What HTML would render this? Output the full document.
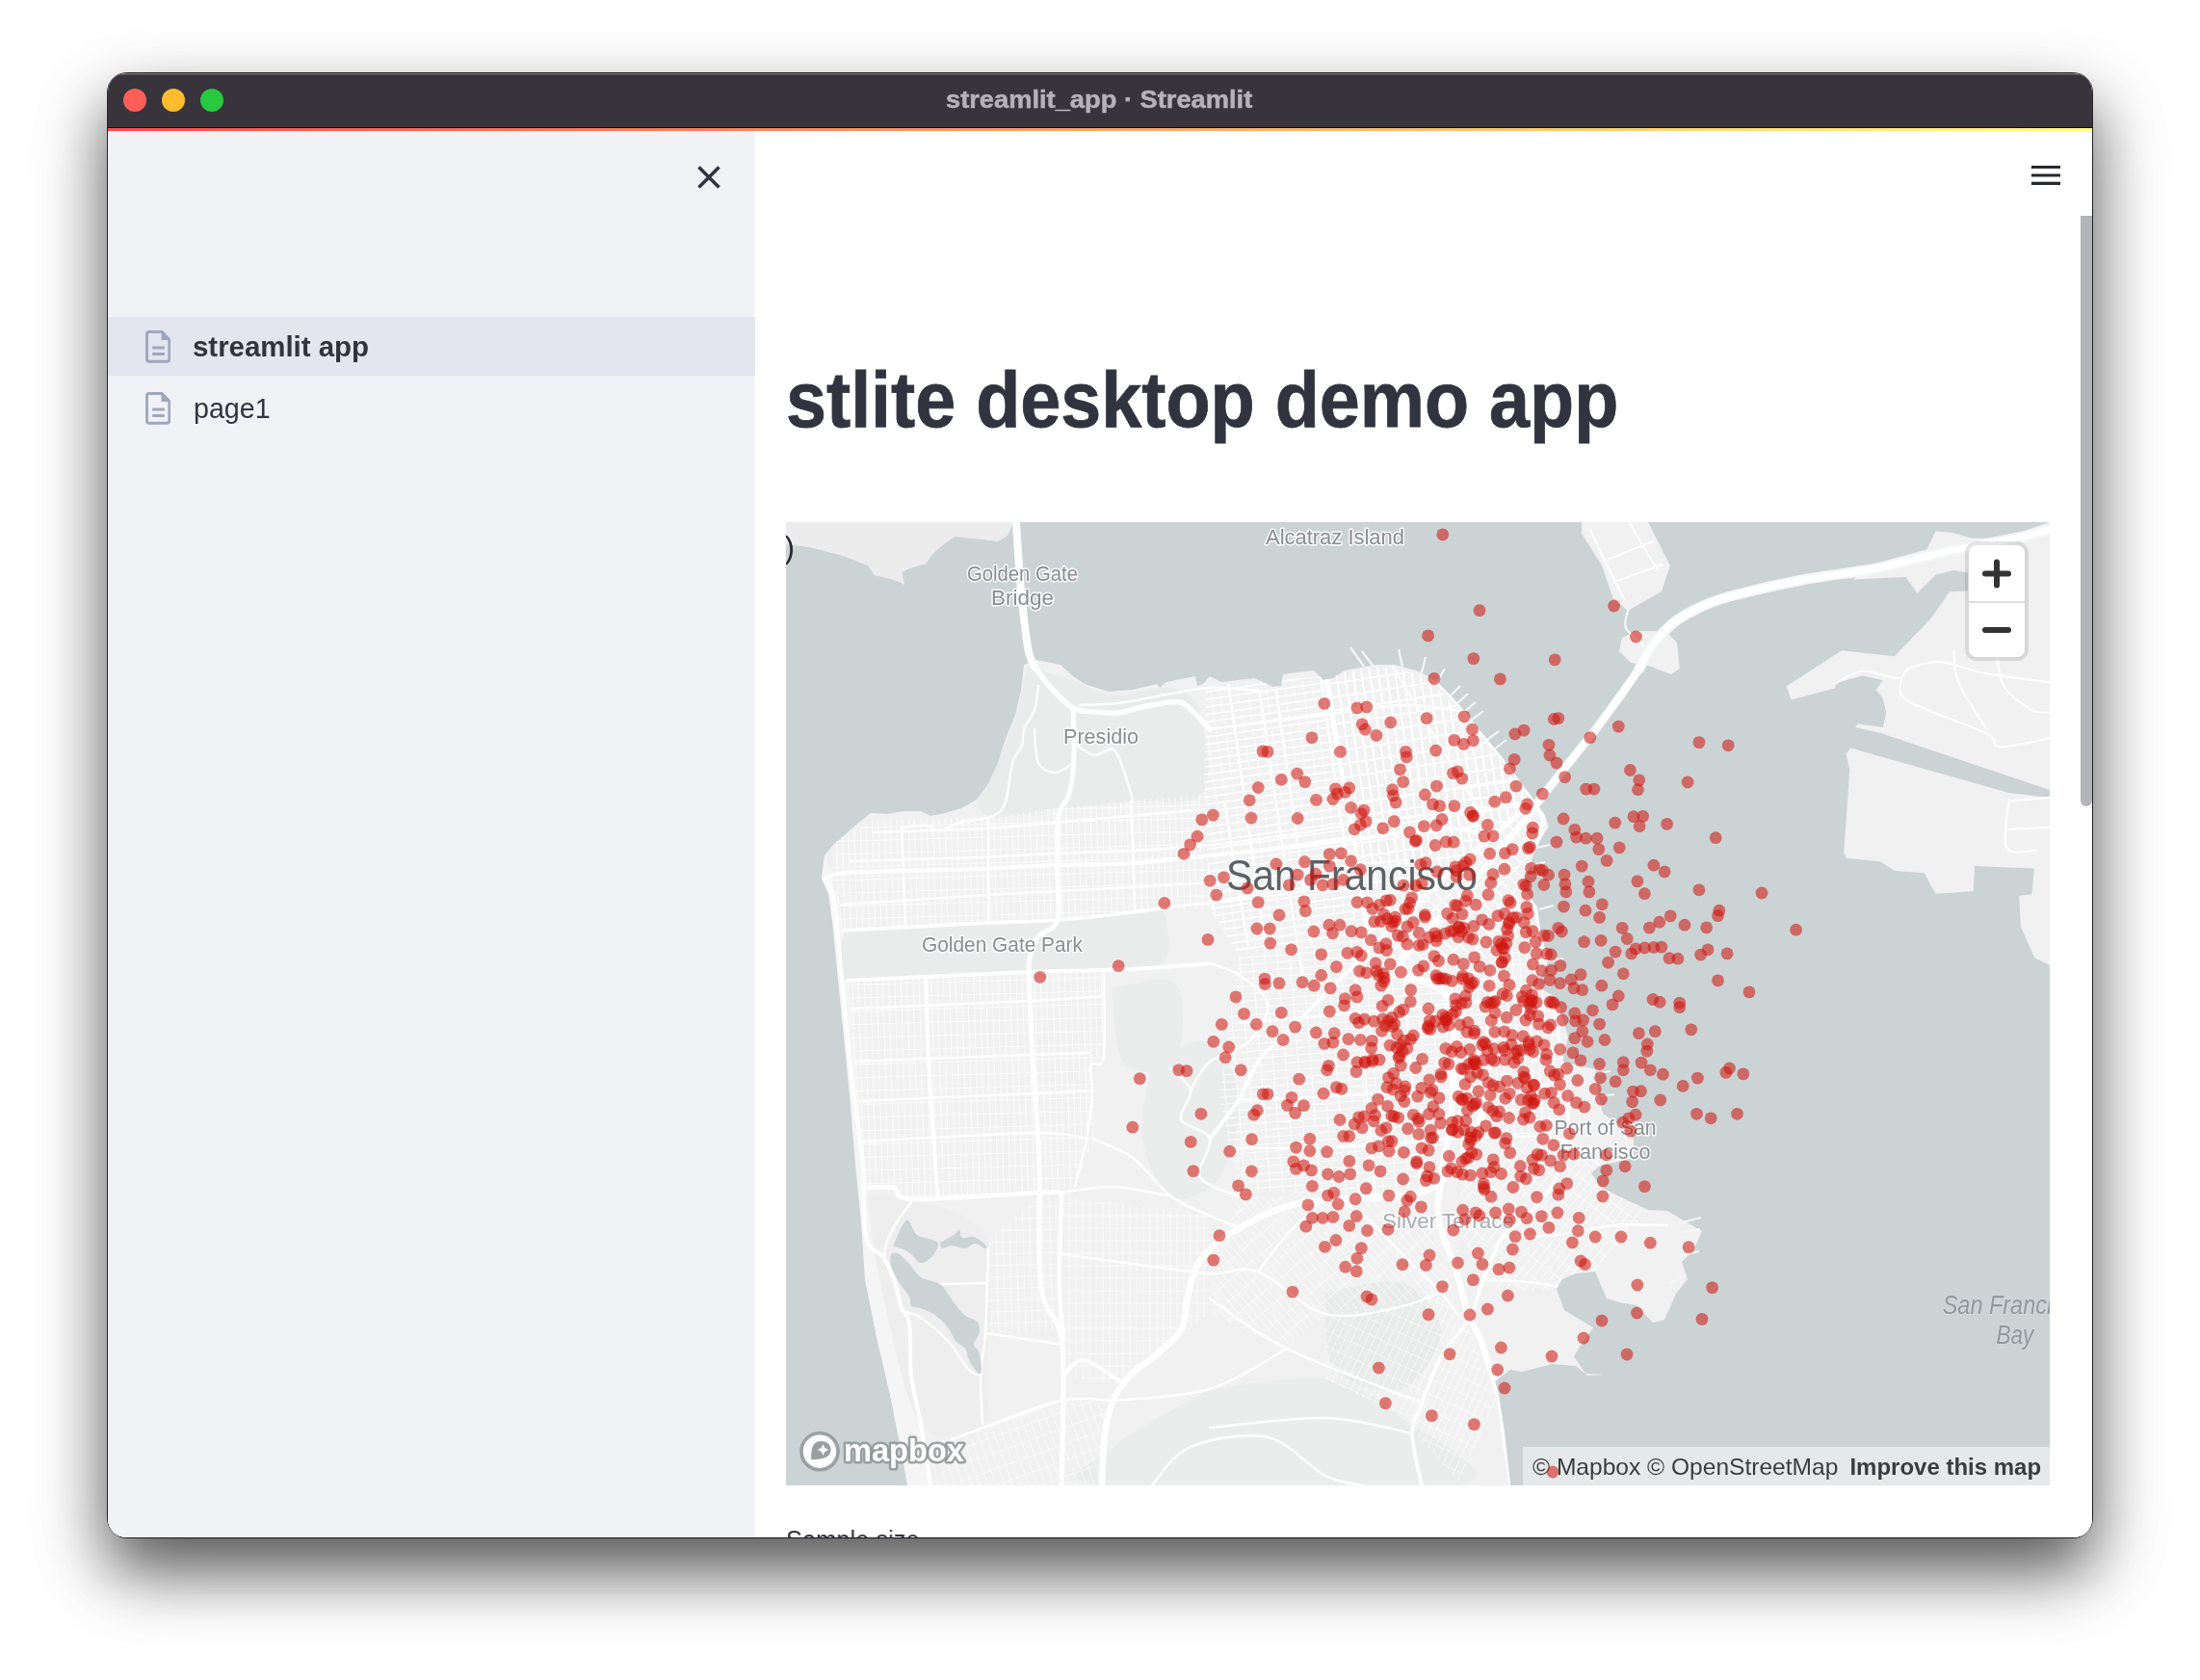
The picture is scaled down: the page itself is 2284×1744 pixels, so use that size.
<!DOCTYPE html>
<html lang="en">
<head>
<meta charset="utf-8">
<title>streamlit_app · Streamlit</title>
<style>
html,body{margin:0;padding:0;}
body{width:2284px;height:1744px;overflow:hidden;background:#fff;position:relative;font-family:"Liberation Sans",sans-serif;}
.abs{position:absolute;}
#shadow{position:absolute;left:112px;top:76px;width:2060px;height:1520px;border-radius:20px;
  box-shadow:0 0 0 1px rgba(0,0,0,.8), 0 34px 65px rgba(0,0,0,.6), 0 32px 95px rgba(0,0,0,.14);}
#win{will-change:transform;position:absolute;left:112px;top:76px;width:2060px;height:1520px;border-radius:19px;overflow:hidden;background:#fff;}
#tbar{position:absolute;left:0;top:0;width:2060px;height:57px;background:#38343b;box-shadow:inset 0 1.500px 0 rgba(255,255,255,.28);}
#tbar .t{position:absolute;left:869.5px;top:11px;font-weight:bold;font-size:26.3px;line-height:32px;color:#b5b2b9;-webkit-text-stroke:.5px #b5b2b9;white-space:nowrap;transform-origin:0 50%;transform:scaleX(1.037);}
.tl{position:absolute;top:16px;width:24px;height:24px;border-radius:50%;}
#sep{position:absolute;left:0;top:56px;width:2060px;height:1px;background:#160c10;}
#deco{position:absolute;left:0;top:57px;width:2060px;height:3px;background:linear-gradient(90deg,#ff4b4b,#fffd80);}
#side{position:absolute;left:0;top:60px;width:674px;height:1460px;background:linear-gradient(90deg,#f0f2f6 0,#f0f2f6 670px,#fff 674px);}
#side .sel{position:absolute;left:0;top:193px;width:672px;height:61px;background:#e3e6ee;}
.nav{position:absolute;left:87.7px;white-space:nowrap;font-size:30px;line-height:40px;color:#31333f;transform-origin:0 50%;}
#main{position:absolute;left:672px;top:60px;width:1388px;height:1460px;background:#fff;}
h1{position:absolute;margin:0;left:32px;top:228.7px;font-size:81.5px;line-height:100px;font-weight:bold;color:#31333f;-webkit-text-stroke:.8px #31333f;white-space:nowrap;transform-origin:0 50%;}
#sb{position:absolute;left:2048px;top:148px;width:12px;height:613px;background:#b4b5b9;border-radius:0 0 6px 6px;}
#map{position:absolute;left:704px;top:466px;width:1312px;height:1000px;overflow:hidden;background:#cbd3d5;}
#lbl{position:absolute;left:704px;top:1506px;transform-origin:0 50%;transform:scaleX(.943);font-size:27px;line-height:34px;color:#31333f;white-space:nowrap;}
</style>
</head>
<body>
<div id="shadow"></div>
<div id="win">
<div id="tbar">
  <div class="tl" style="left:16px;background:#fe5f57;"></div>
  <div class="tl" style="left:56px;background:#febc2e;"></div>
  <div class="tl" style="left:96px;background:#28c840;"></div>
  <div class="t">streamlit_app · Streamlit</div>
</div>
<div id="sep"></div>
<div id="deco"></div>
<div id="side">
  <div class="sel"></div>
  <svg class="abs" style="left:612px;top:36px" width="24" height="24" viewBox="0 0 24 24"><path d="M1.5 1.5L22.5 22.5M22.5 1.5L1.5 22.5" stroke="#31333f" stroke-width="3.6" fill="none"/></svg>
  <svg class="abs" style="left:38.8px;top:207px" width="26.4" height="34" viewBox="0 0 28 34" preserveAspectRatio="none"><path d="M3 1.6h14.5l8 8V30a2.2 2.2 0 0 1-2.2 2.2H3A2.2 2.2 0 0 1 .8 30V3.8A2.2 2.2 0 0 1 3 1.6z" transform="translate(.8 0)" fill="none" stroke="#9fa7c0" stroke-width="3"/><path d="M17.5 1.6v8.4h8.4z" fill="#9fa7c0"/><path d="M7.5 18h13.5M7.5 24.4h13.5" stroke="#9fa7c0" stroke-width="3"/></svg>
  <svg class="abs" style="left:38.8px;top:271px" width="26.4" height="34" viewBox="0 0 28 34" preserveAspectRatio="none"><path d="M3 1.6h14.5l8 8V30a2.2 2.2 0 0 1-2.2 2.2H3A2.2 2.2 0 0 1 .8 30V3.8A2.2 2.2 0 0 1 3 1.6z" transform="translate(.8 0)" fill="none" stroke="#9fa7c0" stroke-width="3"/><path d="M17.5 1.6v8.4h8.4z" fill="#9fa7c0"/><path d="M7.5 18h13.5M7.5 24.4h13.5" stroke="#9fa7c0" stroke-width="3"/></svg>
  <div class="nav" id="nav1" style="top:204.4px;font-weight:bold;transform:scaleX(.98);">streamlit app</div>
  <div class="nav" id="nav2" style="top:268.4px;left:88.7px;transform:scaleX(.955);">page1</div>
</div>
<div id="main">
  <svg class="abs" style="left:1325px;top:33px" width="30" height="24" viewBox="0 0 30 24"><path d="M0 4.5h30M0 13h30M0 21.4h30" stroke="#262730" stroke-width="3.2"/></svg>
  <h1 id="h1" style="transform:scaleX(.9265);">stlite desktop demo app</h1>
</div>
<div id="sb"></div>
<div id="lbl">Sample size</div>
<div id="map">
<svg class="abs" style="left:0;top:0" width="1312" height="1000" viewBox="0 0 1312 1000">
<defs>
<clipPath id="csf"><polygon points="247.0,148.0 260.0,143.0 285.0,148.0 298.0,160.0 310.0,168.0 335.0,176.0 360.0,174.0 385.0,168.0 388.0,172.0 395.0,166.0 425.0,160.0 427.0,170.0 433.0,168.0 440.0,160.0 452.0,166.0 486.0,162.0 500.0,168.0 506.0,171.0 514.0,170.0 516.0,158.0 530.0,156.0 548.0,154.0 558.0,164.0 568.0,162.0 580.0,154.0 612.0,148.0 632.0,148.0 660.0,156.0 676.0,166.0 690.0,180.0 706.0,198.0 720.0,216.0 740.0,240.0 760.0,266.0 776.0,288.0 788.0,304.0 792.0,316.0 784.0,328.0 776.0,345.0 772.0,358.0 764.0,378.0 780.0,400.0 784.0,430.0 792.0,454.0 780.0,482.0 800.0,494.0 806.0,515.0 812.0,534.0 806.0,560.0 840.0,568.0 843.0,590.0 848.0,614.0 866.0,626.0 880.0,640.0 880.0,660.0 845.0,668.0 836.0,676.0 847.0,691.0 865.0,700.0 895.0,714.0 915.0,715.0 951.0,736.0 942.0,756.0 930.0,768.0 936.0,786.0 924.0,801.0 912.0,828.0 900.0,831.0 883.0,813.0 865.0,810.0 852.0,806.0 840.0,778.0 820.0,780.0 806.0,786.0 800.0,796.0 808.0,818.0 838.0,836.0 824.0,856.0 818.0,866.0 830.0,884.0 850.0,885.0 832.0,886.0 820.0,876.0 796.0,874.0 780.0,878.0 764.0,882.0 752.0,880.0 736.0,892.0 740.0,906.0 746.0,946.0 752.0,1000.0 126.0,1000.0 120.0,966.0 108.0,906.0 94.0,846.0 82.0,786.0 78.0,726.0 72.0,666.0 66.0,594.0 60.0,534.0 54.0,474.0 48.0,414.0 44.0,386.0 37.0,370.0 40.0,346.0 50.0,334.0 55.0,330.0 72.0,315.0 88.0,302.0 105.0,303.0 122.0,300.0 140.0,300.0 150.0,305.0 165.0,302.0 182.0,297.0 198.0,288.0 210.0,272.0 220.0,250.0 228.0,225.0 238.0,200.0 244.0,175.0"/></clipPath>
</defs>
<rect width="1312" height="1000" fill="#cbd3d5"/>
<polygon points="247.0,148.0 260.0,143.0 285.0,148.0 298.0,160.0 310.0,168.0 335.0,176.0 360.0,174.0 385.0,168.0 388.0,172.0 395.0,166.0 425.0,160.0 427.0,170.0 433.0,168.0 440.0,160.0 452.0,166.0 486.0,162.0 500.0,168.0 506.0,171.0 514.0,170.0 516.0,158.0 530.0,156.0 548.0,154.0 558.0,164.0 568.0,162.0 580.0,154.0 612.0,148.0 632.0,148.0 660.0,156.0 676.0,166.0 690.0,180.0 706.0,198.0 720.0,216.0 740.0,240.0 760.0,266.0 776.0,288.0 788.0,304.0 792.0,316.0 784.0,328.0 776.0,345.0 772.0,358.0 764.0,378.0 780.0,400.0 784.0,430.0 792.0,454.0 780.0,482.0 800.0,494.0 806.0,515.0 812.0,534.0 806.0,560.0 840.0,568.0 843.0,590.0 848.0,614.0 866.0,626.0 880.0,640.0 880.0,660.0 845.0,668.0 836.0,676.0 847.0,691.0 865.0,700.0 895.0,714.0 915.0,715.0 951.0,736.0 942.0,756.0 930.0,768.0 936.0,786.0 924.0,801.0 912.0,828.0 900.0,831.0 883.0,813.0 865.0,810.0 852.0,806.0 840.0,778.0 820.0,780.0 806.0,786.0 800.0,796.0 808.0,818.0 838.0,836.0 824.0,856.0 818.0,866.0 830.0,884.0 850.0,885.0 832.0,886.0 820.0,876.0 796.0,874.0 780.0,878.0 764.0,882.0 752.0,880.0 736.0,892.0 740.0,906.0 746.0,946.0 752.0,1000.0 126.0,1000.0 120.0,966.0 108.0,906.0 94.0,846.0 82.0,786.0 78.0,726.0 72.0,666.0 66.0,594.0 60.0,534.0 54.0,474.0 48.0,414.0 44.0,386.0 37.0,370.0 40.0,346.0 50.0,334.0 55.0,330.0 72.0,315.0 88.0,302.0 105.0,303.0 122.0,300.0 140.0,300.0 150.0,305.0 165.0,302.0 182.0,297.0 198.0,288.0 210.0,272.0 220.0,250.0 228.0,225.0 238.0,200.0 244.0,175.0" fill="#f0f1f0"/>
<polygon points="0.0,0.0 236.0,0.0 230.0,14.0 220.0,20.0 205.0,18.0 175.0,15.0 165.0,22.0 155.0,30.0 145.0,43.0 128.0,48.0 120.0,52.0 123.0,65.0 118.0,62.0 105.0,58.0 92.0,55.0 85.0,45.0 60.0,35.0 25.0,26.0 0.0,23.0" fill="#f0f1f0"/>
<polygon points="826.0,0.0 895.0,0.0 918.0,45.0 909.0,72.0 874.0,92.0 859.0,80.0 847.0,45.0 826.0,12.0" fill="#f0f1f0"/>
<polygon points="868.0,120.0 883.0,113.0 913.0,113.0 925.0,125.0 928.0,152.0 919.0,158.0 895.0,149.0 877.0,146.0 865.0,134.0" fill="#f0f1f0"/>
<polygon points="1207.8,72.6 1188.8,100.0 1150.7,139.3 1095.9,133.3 1038.8,170.2 1043.5,184.5 1088.8,172.6 1091.1,166.7 1117.3,159.5 1138.8,164.3 1131.6,173.8 1138.8,183.3 1142.3,197.6 1138.8,213.1 1112.6,209.5 1110.2,213.1 1136.4,219.0 1314.0,278.6 1312.0,279.0 1312.0,0.0 1291.1,7.1 1269.7,16.7 1231.6,16.7 1210.2,10.7 1193.5,9.5 1184.0,28.6 1126.9,44.0 1107.8,59.5 1162.6,57.1 1174.5,73.8 1193.5,54.8 1212.6,50.0 1226.9,52.4 1226.9,71.4" fill="#f0f1f0"/>
<polygon points="1105.4,234.5 1100.7,240.5 1104.2,257.1 1098.3,342.9 1100.7,348.8 1136.4,352.4 1150.7,361.9 1181.6,364.3 1193.5,385.7 1232.8,383.3 1234.0,357.1 1295.9,359.5 1293.5,385.7 1284.0,402.4 1295.0,412.0 1312.0,430.0 1312.0,286.0 1269.7,281.0" fill="#f0f1f0"/>
<polygon points="1280.0,388.0 1312.0,384.0 1312.0,460.0 1296.0,452.0 1282.0,420.0" fill="#f0f1f0"/>
<polygon points="0.0,0.0 236.0,0.0 230.0,14.0 220.0,20.0 205.0,18.0 175.0,15.0 165.0,22.0 155.0,30.0 145.0,43.0 128.0,48.0 120.0,52.0 123.0,65.0 118.0,62.0 105.0,58.0 92.0,55.0 85.0,45.0 60.0,35.0 25.0,26.0 0.0,23.0" fill="#ebeceb"/>
<g clip-path="url(#csf)">
<polygon points="40.0,346.0 37.0,370.0 44.0,386.0 48.0,414.0 54.0,474.0 60.0,534.0 66.0,594.0 72.0,666.0 78.0,726.0 82.0,786.0 94.0,846.0 108.0,906.0 120.0,966.0 126.0,1000.0 150.0,1000.0 140.0,936.0 130.0,886.0 124.0,800.0 90.0,740.0 82.0,666.0 74.0,574.0 64.0,474.0 56.0,394.0 48.0,372.0" fill="#f4f5f4"/>
<path d="M250.0 150.0 C258.3 152.5 285.0 160.0 300.0 165.0 C315.0 170.0 323.3 178.8 340.0 180.0 C356.7 181.2 385.0 168.7 400.0 172.0 C415.0 175.3 424.7 181.7 430.0 200.0 C435.3 218.3 443.7 267.0 432.0 282.0 C420.3 297.0 385.3 287.3 360.0 290.0 C334.7 292.7 304.2 295.3 280.0 298.0 C255.8 300.7 228.3 308.0 215.0 306.0 C201.7 304.0 198.8 296.2 200.0 286.0 C201.2 275.8 215.3 260.2 222.0 245.0 C228.7 229.8 235.3 210.8 240.0 195.0 C244.7 179.2 248.3 157.5 250.0 150.0Z" fill="#eaeceb"/>
<path d="M60.0 424.0 C85.0 422.7 172.7 417.8 210.0 416.0 C247.3 414.2 259.0 414.8 284.0 413.0 C309.0 411.2 342.3 407.2 360.0 405.0 C377.7 402.8 384.7 391.5 390.0 400.0 C395.3 408.5 402.0 445.2 392.0 456.0 C382.0 466.8 353.3 463.2 330.0 465.0 C306.7 466.8 283.0 465.8 252.0 467.0 C221.0 468.2 175.7 470.5 144.0 472.0 C112.3 473.5 76.0 484.0 62.0 476.0 C48.0 468.0 60.3 432.7 60.0 424.0Z" fill="#eaeceb"/>
<path d="M338.0 484.0 C348.3 482.7 387.7 470.0 400.0 476.0 C412.3 482.0 412.3 505.0 412.0 520.0 C411.7 535.0 408.3 559.3 398.0 566.0 C387.7 572.7 360.0 573.7 350.0 560.0 C340.0 546.3 340.0 496.7 338.0 484.0Z" fill="#ebedec"/>
<path d="M380.0 560.0 C390.0 556.7 425.0 533.3 440.0 540.0 C455.0 546.7 468.3 576.7 470.0 600.0 C471.7 623.3 461.7 663.3 450.0 680.0 C438.3 696.7 413.3 706.7 400.0 700.0 C386.7 693.3 373.3 663.3 370.0 640.0 C366.7 616.7 378.3 573.3 380.0 560.0Z" fill="#ebedec"/>
<path d="M560.0 800.0 C573.3 798.3 620.0 783.3 640.0 790.0 C660.0 796.7 680.0 821.7 680.0 840.0 C680.0 858.3 658.3 893.3 640.0 900.0 C621.7 906.7 583.3 896.7 570.0 880.0 C556.7 863.3 561.7 813.3 560.0 800.0Z" fill="#eaeceb"/>
<path d="M440.0 900.0 C460.0 898.3 526.7 885.0 560.0 890.0 C593.3 895.0 616.7 911.7 640.0 930.0 C663.3 948.3 751.7 988.3 700.0 1000.0 C648.3 1011.7 390.0 1006.7 330.0 1000.0 C270.0 993.3 321.7 976.7 340.0 960.0 C358.3 943.3 423.3 910.0 440.0 900.0Z" fill="#ebedec"/>
<path d="M84.0 700.0 C92.0 700.5 111.0 695.5 132.0 703.0 C153.0 710.5 197.3 715.5 210.0 745.0 C222.7 774.5 209.0 847.5 208.0 880.0 C207.0 912.5 215.3 930.7 204.0 940.0 C192.7 949.3 157.3 959.3 140.0 936.0 C122.7 912.7 109.3 839.3 100.0 800.0 C90.7 760.7 86.7 716.7 84.0 700.0Z" fill="#edeeed"/>
<clipPath id="g22"><polygon points="52.0,330.0 90.0,310.0 206.0,306.0 280.0,297.0 360.0,289.0 432.0,282.0 436.0,352.0 440.0,400.0 360.0,405.0 284.0,413.0 210.0,416.0 60.0,424.0 48.0,414.0 44.0,386.0"/></clipPath>
<path clip-path="url(#g22)" d="M15.4 138.9L27.7 579.4M21.7 138.7L34.0 579.2M28.0 138.5L40.3 579.1M34.3 138.4L46.6 578.9M40.6 138.2L52.9 578.7M46.9 138.0L59.2 578.5M53.2 137.8L65.5 578.4M59.5 137.7L71.8 578.2M65.8 137.5L78.1 578.0M72.1 137.3L84.4 577.8M78.4 137.1L90.7 577.7M84.7 137.0L97.0 577.5M91.0 136.8L103.3 577.3M97.3 136.6L109.6 577.1M103.6 136.4L115.9 577.0M109.9 136.3L122.2 576.8M116.2 136.1L128.5 576.6M122.5 135.9L134.8 576.4M128.8 135.7L141.1 576.2M135.1 135.6L147.4 576.1M141.4 135.4L153.7 575.9M147.7 135.2L160.0 575.7M154.0 135.0L166.3 575.5M160.3 134.9L172.6 575.4M166.6 134.7L178.9 575.2M172.9 134.5L185.2 575.0M179.2 134.3L191.5 574.8M185.5 134.1L197.8 574.7M191.8 134.0L204.1 574.5M198.1 133.8L210.4 574.3M204.4 133.6L216.7 574.1M210.7 133.4L223.0 574.0M217.0 133.3L229.3 573.8M223.3 133.1L235.6 573.6M229.6 132.9L241.9 573.4M235.8 132.7L248.2 573.3M242.1 132.6L254.4 573.1M248.4 132.4L260.7 572.9M254.7 132.2L267.0 572.7M261.0 132.0L273.3 572.6M267.3 131.9L279.6 572.4M273.6 131.7L285.9 572.2M279.9 131.5L292.2 572.0M286.2 131.3L298.5 571.9M292.5 131.2L304.8 571.7M298.8 131.0L311.1 571.5M305.1 130.8L317.4 571.3M311.4 130.6L323.7 571.1M317.7 130.5L330.0 571.0M324.0 130.3L336.3 570.8M330.3 130.1L342.6 570.6M336.6 129.9L348.9 570.4M342.9 129.8L355.2 570.3M349.2 129.6L361.5 570.1M355.5 129.4L367.8 569.9M361.8 129.2L374.1 569.7M368.1 129.0L380.4 569.6M374.4 128.9L386.7 569.4M380.7 128.7L393.0 569.2M387.0 128.5L399.3 569.0M393.3 128.3L405.6 568.9M399.6 128.2L411.9 568.7M405.9 128.0L418.2 568.5M412.2 127.8L424.5 568.3M418.5 127.6L430.8 568.2M424.8 127.5L437.1 568.0M431.1 127.3L443.4 567.8M437.4 127.1L449.7 567.6M443.7 126.9L456.0 567.5M450.0 126.8L462.3 567.3M456.3 126.6L468.6 567.1M15.3 129.7L455.9 117.4M15.7 143.2L456.2 130.9M16.1 156.7L456.6 144.4M16.5 170.2L457.0 157.9M16.8 183.7L457.4 171.4M17.2 197.2L457.7 184.9M17.6 210.7L458.1 198.4M18.0 224.2L458.5 211.9M18.3 237.7L458.9 225.4M18.7 251.2L459.2 238.9M19.1 264.7L459.6 252.4M19.5 278.2L460.0 265.9M19.9 291.7L460.4 279.4M20.2 305.2L460.8 292.9M20.6 318.7L461.1 306.4M21.0 332.2L461.5 319.9M21.4 345.7L461.9 333.4M21.7 359.2L462.3 346.8M22.1 372.6L462.6 360.3M22.5 386.1L463.0 373.8M22.9 399.6L463.4 387.3M23.2 413.1L463.8 400.8M23.6 426.6L464.1 414.3M24.0 440.1L464.5 427.8M24.4 453.6L464.9 441.3M24.8 467.1L465.3 454.8M25.1 480.6L465.7 468.3M25.5 494.1L466.0 481.8M25.9 507.6L466.4 495.3M26.3 521.1L466.8 508.8M26.6 534.6L467.2 522.3M27.0 548.1L467.5 535.8M27.4 561.6L467.9 549.3M27.8 575.1L468.3 562.8M28.1 588.6L468.7 576.3" stroke="#fff" stroke-width="1" stroke-opacity="0.7" fill="none"/>
<clipPath id="g24"><polygon points="64.0,476.0 252.0,467.0 330.0,465.0 332.0,556.0 318.0,566.0 320.0,640.0 300.0,690.0 132.0,703.0 82.0,691.0"/></clipPath>
<path clip-path="url(#g24)" d="M-2.5 400.3L8.1 778.6M3.8 400.1L14.4 778.4M10.1 400.0L20.7 778.2M16.4 399.8L27.0 778.1M22.7 399.6L33.2 777.9M29.0 399.4L39.5 777.7M35.3 399.3L45.8 777.5M41.6 399.1L52.1 777.4M47.9 398.9L58.4 777.2M54.2 398.7L64.7 777.0M60.5 398.6L71.0 776.8M66.8 398.4L77.3 776.7M73.1 398.2L83.6 776.5M79.4 398.0L89.9 776.3M85.7 397.9L96.2 776.1M92.0 397.7L102.5 776.0M98.3 397.5L108.8 775.8M104.6 397.3L115.1 775.6M110.8 397.1L121.4 775.4M117.1 397.0L127.7 775.2M123.4 396.8L134.0 775.1M129.7 396.6L140.3 774.9M136.0 396.4L146.6 774.7M142.3 396.3L152.9 774.5M148.6 396.1L159.2 774.4M154.9 395.9L165.5 774.2M161.2 395.7L171.8 774.0M167.5 395.6L178.1 773.8M173.8 395.4L184.4 773.7M180.1 395.2L190.7 773.5M186.4 395.0L197.0 773.3M192.7 394.9L203.3 773.1M199.0 394.7L209.6 773.0M205.3 394.5L215.9 772.8M211.6 394.3L222.2 772.6M217.9 394.2L228.5 772.4M224.2 394.0L234.8 772.3M230.5 393.8L241.1 772.1M236.8 393.6L247.4 771.9M243.1 393.5L253.7 771.7M249.4 393.3L260.0 771.6M255.7 393.1L266.3 771.4M262.0 392.9L272.6 771.2M268.3 392.8L278.9 771.0M274.6 392.6L285.2 770.9M280.9 392.4L291.4 770.7M287.2 392.2L297.7 770.5M293.5 392.0L304.0 770.3M299.8 391.9L310.3 770.1M306.1 391.7L316.6 770.0M312.4 391.5L322.9 769.8M318.7 391.3L329.2 769.6M325.0 391.2L335.5 769.4M331.3 391.0L341.8 769.3M337.6 390.8L348.1 769.1M343.9 390.6L354.4 768.9M350.2 390.5L360.7 768.7M356.5 390.3L367.0 768.6M362.8 390.1L373.3 768.4M369.0 389.9L379.6 768.2M375.3 389.8L385.9 768.0M381.6 389.6L392.2 767.9M387.9 389.4L398.5 767.7M3.6 399.2L381.8 388.6M3.9 413.0L382.2 402.4M4.3 426.7L382.6 416.2M4.7 440.5L383.0 430.0M5.1 454.3L383.4 443.8M5.5 468.1L383.8 457.6M5.9 481.9L384.1 471.4M6.2 495.7L384.5 485.2M6.6 509.5L384.9 498.9M7.0 523.3L385.3 512.7M7.4 537.1L385.7 526.5M7.8 550.9L386.1 540.3M8.2 564.7L386.5 554.1M8.6 578.5L386.8 567.9M8.9 592.3L387.2 581.7M9.3 606.1L387.6 595.5M9.7 619.9L388.0 609.3M10.1 633.7L388.4 623.1M10.5 647.5L388.8 636.9M10.9 661.3L389.1 650.7M11.3 675.0L389.5 664.5M11.6 688.8L389.9 678.3M12.0 702.6L390.3 692.1M12.4 716.4L390.7 705.9M12.8 730.2L391.1 719.7M13.2 744.0L391.5 733.5M13.6 757.8L391.8 747.3M14.0 771.6L392.2 761.0M14.3 785.4L392.6 774.8" stroke="#fff" stroke-width="1" stroke-opacity="0.7" fill="none"/>
<clipPath id="g26"><polygon points="210.0,745.0 264.0,700.0 286.0,700.0 286.0,840.0 208.0,842.0"/></clipPath>
<path clip-path="url(#g26)" d="M146.5 682.8L151.6 864.7M153.5 682.6L158.6 864.5M160.5 682.4L165.6 864.3M167.5 682.2L172.6 864.1M174.5 682.0L179.6 863.9M181.5 681.8L186.6 863.7M188.5 681.6L193.6 863.5M195.5 681.4L200.6 863.3M202.5 681.2L207.6 863.1M209.5 681.0L214.6 862.9M216.5 680.8L221.6 862.8M223.5 680.6L228.5 862.6M230.5 680.4L235.5 862.4M237.5 680.2L242.5 862.2M244.5 680.0L249.5 862.0M251.5 679.8L256.5 861.8M258.5 679.6L263.5 861.6M265.5 679.4L270.5 861.4M272.4 679.2L277.5 861.2M279.4 679.1L284.5 861.0M286.4 678.9L291.5 860.8M293.4 678.7L298.5 860.6M300.4 678.5L305.5 860.4M307.4 678.3L312.5 860.2M314.4 678.1L319.5 860.0M321.4 677.9L326.5 859.8M328.4 677.7L333.5 859.6M335.4 677.5L340.5 859.4M342.4 677.3L347.5 859.2M153.3 677.6L335.3 672.5M153.7 689.6L335.6 684.5M154.0 701.6L336.0 696.5M154.4 713.6L336.3 708.5M154.7 725.6L336.6 720.5M155.0 737.6L337.0 732.5M155.4 749.6L337.3 744.5M155.7 761.5L337.6 756.5M156.0 773.5L338.0 768.5M156.4 785.5L338.3 780.5M156.7 797.5L338.6 792.4M157.0 809.5L339.0 804.4M157.4 821.5L339.3 816.4M157.7 833.5L339.6 828.4M158.0 845.5L340.0 840.4M158.4 857.5L340.3 852.4M158.7 869.5L340.7 864.4" stroke="#fff" stroke-width="1" stroke-opacity="0.5" fill="none"/>
<clipPath id="g28"><polygon points="436.0,170.0 560.0,160.0 575.0,250.0 590.0,330.0 600.0,400.0 560.0,440.0 470.0,450.0 440.0,400.0 434.0,282.0"/></clipPath>
<path clip-path="url(#g28)" d="M317.0 154.3L667.7 105.0M318.1 161.9L668.8 112.6M319.1 169.5L669.8 120.2M320.2 177.1L670.9 127.9M321.3 184.8L672.0 135.5M322.4 192.4L673.1 143.1M323.4 200.0L674.1 150.7M324.5 207.6L675.2 158.4M325.6 215.3L676.3 166.0M326.6 222.9L677.3 173.6M327.7 230.5L678.4 181.2M328.8 238.1L679.5 188.9M329.9 245.8L680.6 196.5M330.9 253.4L681.6 204.1M332.0 261.0L682.7 211.7M333.1 268.6L683.8 219.4M334.1 276.3L684.9 227.0M335.2 283.9L685.9 234.6M336.3 291.5L687.0 242.2M337.4 299.1L688.1 249.9M338.4 306.8L689.1 257.5M339.5 314.4L690.2 265.1M340.6 322.0L691.3 272.7M341.6 329.6L692.4 280.4M342.7 337.3L693.4 288.0M343.8 344.9L694.5 295.6M344.9 352.5L695.6 303.2M345.9 360.1L696.6 310.9M347.0 367.8L697.7 318.5M348.1 375.4L698.8 326.1M349.1 383.0L699.9 333.7M350.2 390.6L700.9 341.4M351.3 398.3L702.0 349.0M352.4 405.9L703.1 356.6M353.4 413.5L704.1 364.2M354.5 421.1L705.2 371.9M355.6 428.8L706.3 379.5M356.7 436.4L707.4 387.1M357.7 444.0L708.4 394.7M358.8 451.6L709.5 402.4M359.9 459.3L710.6 410.0M360.9 466.9L711.6 417.6M362.0 474.5L712.7 425.2M363.1 482.1L713.8 432.9M364.2 489.8L714.9 440.5M365.2 497.4L715.9 448.1M366.3 505.0L717.0 455.7" stroke="#fff" stroke-width="1.8" stroke-opacity="0.85" fill="none"/>
<clipPath id="g30"><polygon points="436.0,170.0 560.0,160.0 575.0,250.0 590.0,330.0 600.0,400.0 560.0,440.0 470.0,450.0 440.0,400.0 434.0,282.0"/></clipPath>
<path clip-path="url(#g30)" d="M311.7 155.0L361.0 505.7M321.2 153.7L370.5 504.4M330.7 152.4L380.0 503.1M340.3 151.0L389.5 501.7M349.8 149.7L399.0 500.4M359.3 148.4L408.6 499.1M368.8 147.0L418.1 497.7M378.3 145.7L427.6 496.4M387.8 144.3L437.1 495.0M397.3 143.0L446.6 493.7M406.8 141.7L456.1 492.4M416.3 140.3L465.6 491.0M425.8 139.0L475.1 489.7M435.3 137.7L484.6 488.4M444.8 136.3L494.1 487.0M454.3 135.0L503.6 485.7M463.8 133.7L513.1 484.4M473.3 132.3L522.6 483.0M482.8 131.0L532.1 481.7M492.4 129.6L541.6 480.4M501.9 128.3L551.2 479.0M511.4 127.0L560.7 477.7M520.9 125.6L570.2 476.3M530.4 124.3L579.7 475.0M539.9 123.0L589.2 473.7M549.4 121.6L598.7 472.3M558.9 120.3L608.2 471.0M568.4 119.0L617.7 469.7M577.9 117.6L627.2 468.3M587.4 116.3L636.7 467.0M596.9 115.0L646.2 465.7M606.4 113.6L655.7 464.3M615.9 112.3L665.2 463.0M625.4 110.9L674.7 461.6M635.0 109.6L684.2 460.3M644.5 108.3L693.7 459.0M654.0 106.9L703.3 457.6M663.5 105.6L712.8 456.3M673.0 104.3L722.3 455.0" stroke="#fff" stroke-width="1" stroke-opacity="0.45" fill="none"/>
<clipPath id="g32"><polygon points="436.0,170.0 560.0,160.0 575.0,250.0 590.0,330.0 600.0,400.0 560.0,440.0 470.0,450.0 440.0,400.0 434.0,282.0"/></clipPath>
<path clip-path="url(#g32)" d="M312.1 155.0L361.4 505.7M359.7 148.3L408.9 499.0M407.2 141.6L456.5 492.3M454.7 134.9L504.0 485.6M502.3 128.3L551.5 479.0M549.8 121.6L599.1 472.3M597.3 114.9L646.6 465.6M644.9 108.2L694.1 458.9M692.4 101.5L741.7 452.2" stroke="#fff" stroke-width="2.6" stroke-opacity="0.95" fill="none"/>
<clipPath id="g34"><polygon points="560.0,160.0 612.0,150.0 660.0,158.0 700.0,195.0 776.0,290.0 700.0,370.0 640.0,410.0 600.0,400.0 590.0,330.0 575.0,250.0"/></clipPath>
<path clip-path="url(#g34)" d="M462.9 129.7L515.8 483.7M471.4 128.4L524.3 482.5M479.9 127.1L532.9 481.2M488.4 125.8L541.4 479.9M496.9 124.6L549.9 478.7M505.5 123.3L558.4 477.4M514.0 122.0L566.9 476.1M522.5 120.8L575.4 474.8M531.0 119.5L583.9 473.6M539.5 118.2L592.4 472.3M548.0 116.9L600.9 471.0M556.5 115.7L609.4 469.8M565.0 114.4L617.9 468.5M573.5 113.1L626.4 467.2M582.0 111.9L634.9 465.9M590.5 110.6L643.4 464.7M599.0 109.3L651.9 463.4M607.5 108.0L660.4 462.1M616.0 106.8L668.9 460.9M624.5 105.5L677.4 459.6M633.0 104.2L686.0 458.3M641.5 103.0L694.5 457.0M650.0 101.7L703.0 455.8M658.6 100.4L711.5 454.5M667.1 99.1L720.0 453.2M675.6 97.9L728.5 452.0M684.1 96.6L737.0 450.7M692.6 95.3L745.5 449.4M701.1 94.1L754.0 448.1M709.6 92.8L762.5 446.9M718.1 91.5L771.0 445.6M726.6 90.2L779.5 444.3M735.1 89.0L788.0 443.1M743.6 87.7L796.5 441.8M752.1 86.4L805.0 440.5M760.6 85.2L813.5 439.2M769.1 83.9L822.0 438.0M777.6 82.6L830.5 436.7M786.1 81.3L839.1 435.4M794.6 80.1L847.6 434.2M803.1 78.8L856.1 432.9M811.7 77.5L864.6 431.6M820.2 76.3L873.1 430.3M464.1 126.5L818.1 73.5M466.1 140.3L820.2 87.4M468.2 154.2L822.3 101.2M470.3 168.0L824.3 115.1M472.3 181.8L826.4 128.9M474.4 195.7L828.5 142.8M476.5 209.5L830.6 156.6M478.5 223.4L832.6 170.5M480.6 237.2L834.7 184.3M482.7 251.1L836.8 198.2M484.7 264.9L838.8 212.0M486.8 278.8L840.9 225.8M488.9 292.6L843.0 239.7M491.0 306.5L845.0 253.5M493.0 320.3L847.1 267.4M495.1 334.2L849.2 281.2M497.2 348.0L851.3 295.1M499.2 361.8L853.3 308.9M501.3 375.7L855.4 322.8M503.4 389.5L857.5 336.6M505.4 403.4L859.5 350.5M507.5 417.2L861.6 364.3M509.6 431.1L863.7 378.2M511.7 444.9L865.7 392.0M513.7 458.8L867.8 405.8M515.8 472.6L869.9 419.7M517.9 486.5L871.9 433.5" stroke="#fff" stroke-width="2" stroke-opacity="0.9" fill="none"/>
<clipPath id="g36"><polygon points="776.0,290.0 790.0,320.0 775.0,360.0 780.0,420.0 700.0,470.0 610.0,445.0 600.0,400.0 640.0,410.0 700.0,370.0"/></clipPath>
<path clip-path="url(#g36)" d="M494.6 381.2L693.8 580.4M501.3 374.4L700.6 573.7M508.1 367.7L707.3 566.9M514.8 361.0L714.0 560.2M521.5 354.3L720.7 553.5M528.2 347.6L727.4 546.8M534.9 340.9L734.1 540.1M541.7 334.1L740.9 533.3M548.4 327.4L747.6 526.6M555.1 320.7L754.3 519.9M561.8 314.0L761.0 513.2M568.5 307.3L767.7 506.5M575.2 300.5L774.5 499.8M582.0 293.8L781.2 493.0M588.7 287.1L787.9 486.3M595.4 280.4L794.6 479.6M602.1 273.7L801.3 472.9M608.8 267.0L808.0 466.2M615.5 260.2L814.8 459.5M622.3 253.5L821.5 452.7M629.0 246.8L828.2 446.0M635.7 240.1L834.9 439.3M642.4 233.4L841.6 432.6M649.1 226.7L848.3 425.9M655.9 219.9L855.1 419.1M662.6 213.2L861.8 412.4M669.3 206.5L868.5 405.7M676.0 199.8L875.2 399.0M682.7 193.1L881.9 392.3M689.4 186.3L888.7 385.6M696.2 179.6L895.4 378.8M489.3 373.5L688.5 174.3M499.9 384.1L699.1 184.9M510.5 394.8L709.8 195.5M521.1 405.4L720.4 206.1M531.8 416.0L731.0 216.8M542.4 426.6L741.6 227.4M553.0 437.2L752.2 238.0M563.6 447.8L762.8 248.6M574.2 458.4L773.4 259.2M584.8 469.0L784.0 269.8M595.4 479.6L794.6 280.4M606.0 490.2L805.2 291.0M616.6 500.8L815.8 301.6M627.2 511.4L826.4 312.2M637.8 522.0L837.0 322.8M648.4 532.6L847.6 333.4M659.0 543.2L858.2 344.0M669.6 553.9L868.9 354.6M680.2 564.5L879.5 365.2M690.9 575.1L890.1 375.9M701.5 585.7L900.7 386.5" stroke="#fff" stroke-width="1.5" stroke-opacity="0.85" fill="none"/>
<clipPath id="g38"><polygon points="470.0,450.0 560.0,440.0 600.0,400.0 610.0,445.0 690.0,472.0 690.0,640.0 640.0,700.0 560.0,700.0 470.0,690.0 450.0,600.0 460.0,520.0"/></clipPath>
<path clip-path="url(#g38)" d="M346.8 364.8L378.5 767.8M359.7 363.8L391.5 766.8M372.7 362.8L404.4 765.8M385.7 361.8L417.4 764.7M398.6 360.8L430.3 763.7M411.6 359.7L443.3 762.7M424.5 358.7L456.3 761.7M437.5 357.7L469.2 760.7M450.5 356.7L482.2 759.6M463.4 355.7L495.1 758.6M476.4 354.6L508.1 757.6M489.3 353.6L521.1 756.6M502.3 352.6L534.0 755.6M515.3 351.6L547.0 754.5M528.2 350.6L559.9 753.5M541.2 349.5L572.9 752.5M554.1 348.5L585.9 751.5M567.1 347.5L598.8 750.5M580.1 346.5L611.8 749.4M593.0 345.5L624.7 748.4M606.0 344.4L637.7 747.4M618.9 343.4L650.7 746.4M631.9 342.4L663.6 745.4M644.9 341.4L676.6 744.3M657.8 340.4L689.5 743.3M670.8 339.3L702.5 742.3M683.7 338.3L715.5 741.3M696.7 337.3L728.4 740.3M709.7 336.3L741.4 739.2M722.6 335.3L754.3 738.2M735.6 334.2L767.3 737.2M748.5 333.2L780.3 736.2M761.5 332.2L793.2 735.2M352.6 364.0L755.6 332.3M353.2 371.5L756.2 339.7M353.8 378.9L756.8 347.2M354.4 386.4L757.3 354.7M355.0 393.9L757.9 362.2M355.6 401.4L758.5 369.7M356.2 408.8L759.1 377.1M356.8 416.3L759.7 384.6M357.3 423.8L760.3 392.1M357.9 431.3L760.9 399.6M358.5 438.7L761.5 407.0M359.1 446.2L762.1 414.5M359.7 453.7L762.6 422.0M360.3 461.2L763.2 429.5M360.9 468.7L763.8 436.9M361.5 476.1L764.4 444.4M362.1 483.6L765.0 451.9M362.6 491.1L765.6 459.4M363.2 498.6L766.2 466.9M363.8 506.0L766.8 474.3M364.4 513.5L767.4 481.8M365.0 521.0L767.9 489.3M365.6 528.5L768.5 496.8M366.2 535.9L769.1 504.2M366.8 543.4L769.7 511.7M367.4 550.9L770.3 519.2M367.9 558.4L770.9 526.7M368.5 565.9L771.5 534.1M369.1 573.3L772.1 541.6M369.7 580.8L772.6 549.1M370.3 588.3L773.2 556.6M370.9 595.8L773.8 564.1M371.5 603.2L774.4 571.5M372.1 610.7L775.0 579.0M372.6 618.2L775.6 586.5M373.2 625.7L776.2 594.0M373.8 633.1L776.8 601.4M374.4 640.6L777.4 608.9M375.0 648.1L777.9 616.4M375.6 655.6L778.5 623.9M376.2 663.1L779.1 631.3M376.8 670.5L779.7 638.8M377.4 678.0L780.3 646.3M377.9 685.5L780.9 653.8M378.5 693.0L781.5 661.3M379.1 700.4L782.1 668.7M379.7 707.9L782.7 676.2M380.3 715.4L783.2 683.7M380.9 722.9L783.8 691.2M381.5 730.3L784.4 698.6M382.1 737.8L785.0 706.1M382.7 745.3L785.6 713.6M383.2 752.8L786.2 721.1M383.8 760.3L786.8 728.5M384.4 767.7L787.4 736.0" stroke="#fff" stroke-width="1.1" stroke-opacity="0.75" fill="none"/>
<clipPath id="g40"><polygon points="700.0,470.0 780.0,430.0 806.0,515.0 812.0,560.0 800.0,640.0 700.0,640.0 690.0,472.0"/></clipPath>
<path clip-path="url(#g40)" d="M609.3 410.8L623.1 673.3M616.8 410.4L630.6 672.9M624.3 410.0L638.0 672.5M631.8 409.6L645.5 672.1M639.3 409.2L653.0 671.7M646.8 408.8L660.5 671.4M654.2 408.5L668.0 671.0M661.7 408.1L675.5 670.6M669.2 407.7L683.0 670.2M676.7 407.3L690.5 669.8M684.2 406.9L698.0 669.4M691.7 406.5L705.5 669.0M699.2 406.1L712.9 668.6M706.7 405.7L720.4 668.2M714.2 405.3L727.9 667.8M721.7 404.9L735.4 667.4M729.1 404.5L742.9 667.0M736.6 404.1L750.4 666.6M744.1 403.7L757.9 666.3M751.6 403.4L765.4 665.9M759.1 403.0L772.9 665.5M766.6 402.6L780.3 665.1M774.1 402.2L787.8 664.7M781.6 401.8L795.3 664.3M789.1 401.4L802.8 663.9M796.5 401.0L810.3 663.5M804.0 400.6L817.8 663.1M811.5 400.2L825.3 662.7M819.0 399.8L832.8 662.3M826.5 399.4L840.3 661.9M834.0 399.0L847.8 661.5M841.5 398.6L855.2 661.2M849.0 398.3L862.7 660.8M856.5 397.9L870.2 660.4M864.0 397.5L877.7 660.0M871.4 397.1L885.2 659.6M878.9 396.7L892.7 659.2M612.6 404.6L875.1 390.8M613.2 417.0L875.7 403.3M613.9 429.5L876.4 415.8M614.5 442.0L877.0 428.3M615.2 454.5L877.7 440.7M615.8 467.0L878.3 453.2M616.5 479.5L879.0 465.7M617.1 491.9L879.6 478.2M617.8 504.4L880.3 490.7M618.4 516.9L880.9 503.2M619.1 529.4L881.6 515.6M619.7 541.9L882.3 528.1M620.4 554.4L882.9 540.6M621.1 566.8L883.6 553.1M621.7 579.3L884.2 565.6M622.4 591.8L884.9 578.1M623.0 604.3L885.5 590.5M623.7 616.8L886.2 603.0M624.3 629.3L886.8 615.5M625.0 641.7L887.5 628.0M625.6 654.2L888.1 640.5M626.3 666.7L888.8 653.0M626.9 679.2L889.4 665.4" stroke="#fff" stroke-width="1.1" stroke-opacity="0.8" fill="none"/>
<clipPath id="g42"><polygon points="700.0,640.0 800.0,640.0 880.0,660.0 895.0,714.0 840.0,778.0 800.0,796.0 740.0,800.0 700.0,740.0"/></clipPath>
<path clip-path="url(#g42)" d="M769.0 525.0L601.4 739.5M774.9 529.6L607.3 744.1M780.8 534.2L613.2 748.8M786.7 538.9L619.1 753.4M792.7 543.5L625.0 758.0M798.6 548.1L631.0 762.6M804.5 552.7L636.9 767.2M810.4 557.3L642.8 771.9M816.3 561.9L648.7 776.5M822.2 566.6L654.6 781.1M828.1 571.2L660.5 785.7M834.0 575.8L666.4 790.3M839.9 580.4L672.3 794.9M845.8 585.0L678.2 799.6M851.8 589.6L684.1 804.2M857.7 594.3L690.1 808.8M863.6 598.9L696.0 813.4M869.5 603.5L701.9 818.0M875.4 608.1L707.8 822.6M881.3 612.7L713.7 827.3M887.2 617.4L719.6 831.9M893.1 622.0L725.5 836.5M899.0 626.6L731.4 841.1M904.9 631.2L737.3 845.7M910.9 635.8L743.2 850.4M916.8 640.4L749.2 855.0M922.7 645.1L755.1 859.6M928.6 649.7L761.0 864.2M934.5 654.3L766.9 868.8M940.4 658.9L772.8 873.4M946.3 663.5L778.7 878.1M952.2 668.1L784.6 882.7M958.1 672.8L790.5 887.3M964.0 677.4L796.4 891.9M970.0 682.0L802.3 896.5M975.9 686.6L808.3 901.1M981.8 691.2L814.2 905.8M987.7 695.9L820.1 910.4M993.6 700.5L826.0 915.0M778.9 522.7L993.4 690.3M769.0 535.3L983.6 702.9M759.2 547.9L973.7 715.5M749.3 560.5L963.9 728.2M739.5 573.2L954.0 740.8M729.6 585.8L944.2 753.4M719.8 598.4L934.3 766.0M709.9 611.0L924.5 778.6M700.1 623.6L914.6 791.2M690.2 636.2L904.8 803.8M680.4 648.8L894.9 816.4M670.5 661.4L885.1 829.0M660.7 674.0L875.2 841.6M650.8 686.6L865.4 854.2M641.0 699.2L855.5 866.8M631.1 711.8L845.7 879.5M621.3 724.5L835.8 892.1M611.4 737.1L826.0 904.7M601.6 749.7L816.1 917.3" stroke="#fff" stroke-width="1.0" stroke-opacity="0.7" fill="none"/>
<clipPath id="g44"><polygon points="470.0,700.0 560.0,700.0 640.0,700.0 700.0,740.0 690.0,800.0 640.0,810.0 560.0,822.0 520.0,858.0 440.0,822.0 440.0,760.0"/></clipPath>
<path clip-path="url(#g44)" d="M341.3 759.3L549.7 1007.6M346.3 755.1L554.7 1003.5M351.3 750.9L559.7 999.3M356.2 746.7L564.7 995.1M361.2 742.5L569.6 990.9M366.2 738.4L574.6 986.8M371.2 734.2L579.6 982.6M376.2 730.0L584.6 978.4M381.1 725.8L589.6 974.2M386.1 721.7L594.5 970.0M391.1 717.5L599.5 965.9M396.1 713.3L604.5 961.7M401.1 709.1L609.5 957.5M406.0 704.9L614.5 953.3M411.0 700.8L619.4 949.2M416.0 696.6L624.4 945.0M421.0 692.4L629.4 940.8M426.0 688.2L634.4 936.6M430.9 684.1L639.4 932.4M435.9 679.9L644.3 928.3M440.9 675.7L649.3 924.1M445.9 671.5L654.3 919.9M450.9 667.3L659.3 915.7M455.8 663.2L664.3 911.5M460.8 659.0L669.2 907.4M465.8 654.8L674.2 903.2M470.8 650.6L679.2 899.0M475.7 646.5L684.2 894.8M480.7 642.3L689.1 890.7M485.7 638.1L694.1 886.5M490.7 633.9L699.1 882.3M495.7 629.7L704.1 878.1M500.6 625.6L709.1 873.9M505.6 621.4L714.0 869.8M510.6 617.2L719.0 865.6M515.6 613.0L724.0 861.4M520.6 608.8L729.0 857.2M525.5 604.7L734.0 853.1M530.5 600.5L738.9 848.9M535.5 596.3L743.9 844.7M540.5 592.1L748.9 840.5M545.5 588.0L753.9 836.3M550.4 583.8L758.9 832.2M555.4 579.6L763.8 828.0M560.4 575.4L768.8 823.8M565.4 571.2L773.8 819.6M570.4 567.1L778.8 815.5M575.3 562.9L783.8 811.3M580.3 558.7L788.7 807.1M585.3 554.5L793.7 802.9M590.3 550.4L798.7 798.7M332.7 748.4L581.1 540.0M343.0 760.6L591.3 552.2M353.2 772.9L601.6 564.5M363.5 785.2L611.9 576.7M373.8 797.4L622.2 589.0M384.1 809.7L632.5 601.2M394.4 821.9L642.8 613.5M404.7 834.2L653.1 625.8M415.0 846.4L663.3 638.0M425.2 858.7L673.6 650.3M435.5 871.0L683.9 662.5M445.8 883.2L694.2 674.8M456.1 895.5L704.5 687.0M466.4 907.7L714.8 699.3M476.7 920.0L725.0 711.6M486.9 932.2L735.3 723.8M497.2 944.5L745.6 736.1M507.5 956.8L755.9 748.3M517.8 969.0L766.2 760.6M528.1 981.3L776.5 772.8M538.4 993.5L786.8 785.1M548.7 1005.8L797.0 797.4M558.9 1018.0L807.3 809.6" stroke="#fff" stroke-width="1.0" stroke-opacity="0.6" fill="none"/>
<clipPath id="g46"><polygon points="288.0,700.0 440.0,720.0 440.0,822.0 390.0,858.0 352.0,896.0 288.0,886.0"/></clipPath>
<path clip-path="url(#g46)" d="M224.0 664.0L224.0 932.0M231.0 664.0L231.0 932.0M238.0 664.0L238.0 932.0M245.0 664.0L245.0 932.0M252.0 664.0L252.0 932.0M259.0 664.0L259.0 932.0M266.0 664.0L266.0 932.0M273.0 664.0L273.0 932.0M280.0 664.0L280.0 932.0M287.0 664.0L287.0 932.0M294.0 664.0L294.0 932.0M301.0 664.0L301.0 932.0M308.0 664.0L308.0 932.0M315.0 664.0L315.0 932.0M322.0 664.0L322.0 932.0M329.0 664.0L329.0 932.0M336.0 664.0L336.0 932.0M343.0 664.0L343.0 932.0M350.0 664.0L350.0 932.0M357.0 664.0L357.0 932.0M364.0 664.0L364.0 932.0M371.0 664.0L371.0 932.0M378.0 664.0L378.0 932.0M385.0 664.0L385.0 932.0M392.0 664.0L392.0 932.0M399.0 664.0L399.0 932.0M406.0 664.0L406.0 932.0M413.0 664.0L413.0 932.0M420.0 664.0L420.0 932.0M427.0 664.0L427.0 932.0M434.0 664.0L434.0 932.0M441.0 664.0L441.0 932.0M448.0 664.0L448.0 932.0M455.0 664.0L455.0 932.0M462.0 664.0L462.0 932.0M469.0 664.0L469.0 932.0M476.0 664.0L476.0 932.0M483.0 664.0L483.0 932.0M490.0 664.0L490.0 932.0M497.0 664.0L497.0 932.0M504.0 664.0L504.0 932.0M230.0 655.0L498.0 655.0M230.0 668.0L498.0 668.0M230.0 681.0L498.0 681.0M230.0 694.0L498.0 694.0M230.0 707.0L498.0 707.0M230.0 720.0L498.0 720.0M230.0 733.0L498.0 733.0M230.0 746.0L498.0 746.0M230.0 759.0L498.0 759.0M230.0 772.0L498.0 772.0M230.0 785.0L498.0 785.0M230.0 798.0L498.0 798.0M230.0 811.0L498.0 811.0M230.0 824.0L498.0 824.0M230.0 837.0L498.0 837.0M230.0 850.0L498.0 850.0M230.0 863.0L498.0 863.0M230.0 876.0L498.0 876.0M230.0 889.0L498.0 889.0M230.0 902.0L498.0 902.0M230.0 915.0L498.0 915.0M230.0 928.0L498.0 928.0M230.0 941.0L498.0 941.0" stroke="#fff" stroke-width="1.0" stroke-opacity="0.55" fill="none"/>
<clipPath id="g48"><polygon points="560.0,822.0 640.0,814.0 690.0,794.0 740.0,906.0 700.0,1000.0 640.0,930.0 560.0,890.0"/></clipPath>
<path clip-path="url(#g48)" d="M578.8 701.8L454.7 967.9M585.1 704.8L461.1 970.9M591.5 707.8L467.4 973.8M597.8 710.7L473.8 976.8M604.2 713.7L480.1 979.7M610.5 716.6L486.5 982.7M616.9 719.6L492.8 985.7M623.2 722.6L499.1 988.6M629.6 725.5L505.5 991.6M635.9 728.5L511.8 994.5M642.2 731.4L518.2 997.5M648.6 734.4L524.5 1000.4M654.9 737.3L530.9 1003.4M661.3 740.3L537.2 1006.4M667.6 743.3L543.6 1009.3M674.0 746.2L549.9 1012.3M680.3 749.2L556.2 1015.2M686.7 752.1L562.6 1018.2M693.0 755.1L568.9 1021.2M699.3 758.1L575.3 1024.1M705.7 761.0L581.6 1027.1M712.0 764.0L588.0 1030.0M718.4 766.9L594.3 1033.0M724.7 769.9L600.7 1035.9M731.1 772.8L607.0 1038.9M737.4 775.8L613.3 1041.9M743.8 778.8L619.7 1044.8M750.1 781.7L626.0 1047.8M756.4 784.7L632.4 1050.7M762.8 787.6L638.7 1053.7M769.1 790.6L645.1 1056.7M775.5 793.6L651.4 1059.6M781.8 796.5L657.8 1062.6M788.2 799.5L664.1 1065.5M794.5 802.4L670.4 1068.5M800.9 805.4L676.8 1071.4M807.2 808.3L683.1 1074.4M813.5 811.3L689.5 1077.4M819.9 814.3L695.8 1080.3M826.2 817.2L702.2 1083.3M832.6 820.2L708.5 1086.2M838.9 823.1L714.9 1089.2M845.3 826.1L721.2 1092.2M580.4 699.0L846.4 823.1M574.0 712.6L840.1 836.7M567.7 726.2L833.7 850.3M561.3 739.8L827.4 863.9M555.0 753.4L821.1 877.5M548.7 767.0L814.7 891.1M542.3 780.6L808.4 904.7M536.0 794.2L802.0 918.2M529.6 807.8L795.7 931.8M523.3 821.4L789.4 945.4M517.0 835.0L783.0 959.0M510.6 848.6L776.7 972.6M504.3 862.2L770.4 986.2M498.0 875.8L764.0 999.8M491.6 889.3L757.7 1013.4M485.3 902.9L751.3 1027.0M478.9 916.5L745.0 1040.6M472.6 930.1L738.7 1054.2M466.3 943.7L732.3 1067.8M459.9 957.3L726.0 1081.4M453.6 970.9L719.6 1095.0" stroke="#fff" stroke-width="1.0" stroke-opacity="0.55" fill="none"/>
<clipPath id="g50"><polygon points="150.0,1000.0 200.0,942.0 284.0,912.0 340.0,912.0 330.0,1000.0"/></clipPath>
<path clip-path="url(#g50)" d="M93.0 889.3L171.5 1104.8M100.5 886.5L179.0 1102.1M108.0 883.8L186.5 1099.3M115.6 881.1L194.0 1096.6M123.1 878.3L201.5 1093.9M130.6 875.6L209.1 1091.1M138.1 872.8L216.6 1088.4M145.6 870.1L224.1 1085.7M153.1 867.4L231.6 1082.9M160.7 864.6L239.1 1080.2M168.2 861.9L246.6 1077.5M175.7 859.2L254.2 1074.7M183.2 856.4L261.7 1072.0M190.7 853.7L269.2 1069.3M198.3 851.0L276.7 1066.5M205.8 848.2L284.2 1063.8M213.3 845.5L291.7 1061.0M220.8 842.7L299.3 1058.3M228.3 840.0L306.8 1055.6M235.8 837.3L314.3 1052.8M243.4 834.5L321.8 1050.1M250.9 831.8L329.3 1047.4M258.4 829.1L336.9 1044.6M265.9 826.3L344.4 1041.9M273.4 823.6L351.9 1039.2M280.9 820.9L359.4 1036.4M288.5 818.1L366.9 1033.7M296.0 815.4L374.4 1030.9M303.5 812.7L382.0 1028.2M311.0 809.9L389.5 1025.5M318.5 807.2L397.0 1022.7M93.4 874.9L309.0 796.5M98.9 890.0L314.5 811.5M104.4 905.0L319.9 826.6M109.9 920.1L325.4 841.6M115.3 935.1L330.9 856.6M120.8 950.1L336.4 871.7M126.3 965.2L341.8 886.7M131.7 980.2L347.3 901.7M137.2 995.2L352.8 916.8M142.7 1010.3L358.3 931.8M148.2 1025.3L363.7 946.8M153.6 1040.3L369.2 961.9M159.1 1055.4L374.7 976.9M164.6 1070.4L380.1 991.9M170.1 1085.4L385.6 1007.0M175.5 1100.5L391.1 1022.0M181.0 1115.5L396.6 1037.1" stroke="#fff" stroke-width="1.0" stroke-opacity="0.45" fill="none"/>
<path d="M66.0 352.0 C88.3 351.3 164.3 349.3 200.0 348.0 C235.7 346.7 253.3 345.2 280.0 344.0 C306.7 342.8 334.0 342.3 360.0 341.0 C386.0 339.7 423.3 336.8 436.0 336.0" stroke="#fff" stroke-width="2.4" fill="none" stroke-linecap="round" stroke-linejoin="round" stroke-opacity="0.95"/>
<path d="M90.0 322.0 C109.3 321.3 171.0 320.0 206.0 318.0 C241.0 316.0 261.7 313.3 300.0 310.0 C338.3 306.7 413.3 300.0 436.0 298.0" stroke="#fff" stroke-width="2.4" fill="none" stroke-linecap="round" stroke-linejoin="round" stroke-opacity="0.95"/>
<path d="M58.0 397.0 C83.3 395.3 172.3 389.3 210.0 387.0 C247.7 384.7 259.0 384.3 284.0 383.0 C309.0 381.7 334.0 380.5 360.0 379.0 C386.0 377.5 426.7 374.8 440.0 374.0" stroke="#fff" stroke-width="2.4" fill="none" stroke-linecap="round" stroke-linejoin="round" stroke-opacity="0.95"/>
<path d="M210.0 306.0 L210.0 416.0" stroke="#fff" stroke-width="2.4" fill="none" stroke-linecap="round" stroke-linejoin="round" stroke-opacity="0.95"/>
<path d="M358.0 290.0 L362.0 405.0" stroke="#fff" stroke-width="2.4" fill="none" stroke-linecap="round" stroke-linejoin="round" stroke-opacity="0.95"/>
<path d="M120.0 316.0 L124.0 420.0" stroke="#fff" stroke-width="2.4" fill="none" stroke-linecap="round" stroke-linejoin="round" stroke-opacity="0.95"/>
<path d="M68.0 505.0 C99.0 503.7 210.3 499.2 254.0 497.0 C297.7 494.8 317.3 492.8 330.0 492.0" stroke="#fff" stroke-width="2.4" fill="none" stroke-linecap="round" stroke-linejoin="round" stroke-opacity="0.95"/>
<path d="M72.0 560.0 C102.3 558.8 213.3 554.5 254.0 553.0 C294.7 551.5 305.7 551.3 316.0 551.0" stroke="#fff" stroke-width="2.4" fill="none" stroke-linecap="round" stroke-linejoin="round" stroke-opacity="0.95"/>
<path d="M76.0 601.0 C106.3 599.7 217.7 594.8 258.0 593.0 C298.3 591.2 308.0 590.5 318.0 590.0" stroke="#fff" stroke-width="2.4" fill="none" stroke-linecap="round" stroke-linejoin="round" stroke-opacity="0.95"/>
<path d="M80.0 643.0 C110.0 641.5 221.3 634.5 260.0 634.0 C298.7 633.5 303.3 639.0 312.0 640.0" stroke="#fff" stroke-width="2.4" fill="none" stroke-linecap="round" stroke-linejoin="round" stroke-opacity="0.95"/>
<path d="M330.0 465.0 C330.0 479.8 332.3 537.5 330.0 554.0 C327.7 570.5 318.0 558.0 316.0 564.0 C314.0 570.0 318.7 577.3 318.0 590.0 C317.3 602.7 315.0 623.3 312.0 640.0 C309.0 656.7 302.0 681.7 300.0 690.0" stroke="#fff" stroke-width="2.4" fill="none" stroke-linecap="round" stroke-linejoin="round" stroke-opacity="0.95"/>
<path d="M132.0 703.0 C128.7 707.8 117.0 722.5 112.0 732.0 C107.0 741.5 102.0 751.0 102.0 760.0 C102.0 769.0 109.0 776.7 112.0 786.0 C115.0 795.3 115.3 809.3 120.0 816.0 C124.7 822.7 132.0 820.3 140.0 826.0 C148.0 831.7 159.7 841.0 168.0 850.0 C176.3 859.0 184.3 874.0 190.0 880.0 C195.7 886.0 200.0 885.0 202.0 886.0" stroke="#fff" stroke-width="2.4" fill="none" stroke-linecap="round" stroke-linejoin="round" stroke-opacity="0.95"/>
<path d="M210.0 754.0 C209.5 768.7 208.3 820.0 207.0 842.0 C205.7 864.0 202.5 870.3 202.0 886.0 C201.5 901.7 203.7 927.7 204.0 936.0" stroke="#fff" stroke-width="2.4" fill="none" stroke-linecap="round" stroke-linejoin="round" stroke-opacity="0.95"/>
<path d="M208.0 842.0 L288.0 854.0" stroke="#fff" stroke-width="2.4" fill="none" stroke-linecap="round" stroke-linejoin="round" stroke-opacity="0.95"/>
<path d="M160.0 791.0 L207.0 790.0" stroke="#fff" stroke-width="2.4" fill="none" stroke-linecap="round" stroke-linejoin="round" stroke-opacity="0.95"/>
<path d="M262.0 170.0 C261.3 174.2 260.5 187.5 258.0 195.0 C255.5 202.5 249.2 208.8 247.0 215.0 C244.8 221.2 247.0 226.2 245.0 232.0 C243.0 237.8 237.8 240.3 235.0 250.0 C232.2 259.7 231.3 280.8 228.0 290.0 C224.7 299.2 223.0 301.3 215.0 305.0 C207.0 308.7 189.2 309.5 180.0 312.0 C170.8 314.5 165.8 319.5 160.0 320.0 C154.2 320.5 151.3 315.5 145.0 315.0 C138.7 314.5 125.8 316.7 122.0 317.0" stroke="#fff" stroke-width="2.4" fill="none" stroke-linecap="round" stroke-linejoin="round" stroke-opacity="0.95"/>
<path d="M305.0 190.0 C311.7 189.7 330.8 189.7 345.0 188.0 C359.2 186.3 374.2 182.7 390.0 180.0 C405.8 177.3 421.7 172.7 440.0 172.0 C458.3 171.3 490.0 175.3 500.0 176.0" stroke="#fff" stroke-width="2.4" fill="none" stroke-linecap="round" stroke-linejoin="round" stroke-opacity="0.95"/>
<path d="M299.0 230.0 C302.5 232.0 313.2 241.0 320.0 242.0 C326.8 243.0 334.7 232.7 340.0 236.0 C345.3 239.3 348.7 253.2 352.0 262.0 C355.3 270.8 358.7 284.5 360.0 289.0" stroke="#fff" stroke-width="2.4" fill="none" stroke-linecap="round" stroke-linejoin="round" stroke-opacity="0.95"/>
<path d="M258.0 215.0 C258.7 220.8 258.3 242.5 262.0 250.0 C265.7 257.5 274.0 260.0 280.0 260.0 C286.0 260.0 295.0 251.7 298.0 250.0" stroke="#fff" stroke-width="2.4" fill="none" stroke-linecap="round" stroke-linejoin="round" stroke-opacity="0.95"/>
<path d="M440.0 215.0 C453.3 213.3 500.0 207.5 520.0 205.0 C540.0 202.5 540.0 202.5 560.0 200.0 C580.0 197.5 616.7 190.7 640.0 190.0 C663.3 189.3 690.0 195.0 700.0 196.0" stroke="#fff" stroke-width="2.4" fill="none" stroke-linecap="round" stroke-linejoin="round" stroke-opacity="0.95"/>
<path d="M436.0 336.0 C450.0 334.2 492.7 329.0 520.0 325.0 C547.3 321.0 570.0 316.2 600.0 312.0 C630.0 307.8 673.3 303.3 700.0 300.0 C726.7 296.7 750.0 293.3 760.0 292.0" stroke="#fff" stroke-width="2.4" fill="none" stroke-linecap="round" stroke-linejoin="round" stroke-opacity="0.95"/>
<path d="M440.0 374.0 C453.3 372.7 493.3 369.2 520.0 366.0 C546.7 362.8 576.7 357.7 600.0 355.0 C623.3 352.3 650.0 350.8 660.0 350.0" stroke="#fff" stroke-width="2.4" fill="none" stroke-linecap="round" stroke-linejoin="round" stroke-opacity="0.95"/>
<path d="M392.0 400.0 C405.0 398.7 442.0 395.3 470.0 392.0 C498.0 388.7 538.3 383.3 560.0 380.0 C581.7 376.7 593.3 373.3 600.0 372.0" stroke="#fff" stroke-width="2.4" fill="none" stroke-linecap="round" stroke-linejoin="round" stroke-opacity="0.95"/>
<path d="M492.0 176.0 C495.0 196.7 504.0 259.3 510.0 300.0 C516.0 340.7 523.7 391.7 528.0 420.0 C532.3 448.3 534.7 461.7 536.0 470.0" stroke="#fff" stroke-width="2.4" fill="none" stroke-linecap="round" stroke-linejoin="round" stroke-opacity="0.95"/>
<path d="M455.0 290.0 C457.5 305.0 465.8 355.0 470.0 380.0 C474.2 405.0 478.3 430.0 480.0 440.0" stroke="#fff" stroke-width="2.4" fill="none" stroke-linecap="round" stroke-linejoin="round" stroke-opacity="0.95"/>
<path d="M630.0 150.0 C640.0 166.7 675.0 225.0 690.0 250.0 C705.0 275.0 715.0 291.7 720.0 300.0" stroke="#fff" stroke-width="2.4" fill="none" stroke-linecap="round" stroke-linejoin="round" stroke-opacity="0.95"/>
<path d="M600.0 290.0 C616.7 287.7 673.3 279.7 700.0 276.0 C726.7 272.3 750.0 269.3 760.0 268.0" stroke="#fff" stroke-width="2.4" fill="none" stroke-linecap="round" stroke-linejoin="round" stroke-opacity="0.95"/>
<path d="M590.0 445.0 C591.7 464.2 596.3 517.5 600.0 560.0 C603.7 602.5 610.0 676.7 612.0 700.0" stroke="#fff" stroke-width="2.4" fill="none" stroke-linecap="round" stroke-linejoin="round" stroke-opacity="0.95"/>
<path d="M640.0 440.0 C641.3 460.0 644.7 516.7 648.0 560.0 C651.3 603.3 658.0 676.7 660.0 700.0" stroke="#fff" stroke-width="2.4" fill="none" stroke-linecap="round" stroke-linejoin="round" stroke-opacity="0.95"/>
<path d="M690.0 472.0 C691.0 486.7 694.3 532.0 696.0 560.0 C697.7 588.0 699.3 626.7 700.0 640.0" stroke="#fff" stroke-width="2.4" fill="none" stroke-linecap="round" stroke-linejoin="round" stroke-opacity="0.95"/>
<path d="M470.0 520.0 C485.0 518.7 523.3 515.3 560.0 512.0 C596.7 508.7 653.3 503.0 690.0 500.0 C726.7 497.0 765.0 495.0 780.0 494.0" stroke="#fff" stroke-width="2.4" fill="none" stroke-linecap="round" stroke-linejoin="round" stroke-opacity="0.95"/>
<path d="M470.0 600.0 C485.0 599.3 523.3 597.7 560.0 596.0 C596.7 594.3 650.0 591.7 690.0 590.0 C730.0 588.3 781.7 586.7 800.0 586.0" stroke="#fff" stroke-width="2.4" fill="none" stroke-linecap="round" stroke-linejoin="round" stroke-opacity="0.95"/>
<path d="M470.0 650.0 C491.7 649.7 561.7 649.7 600.0 648.0 C638.3 646.3 666.7 641.3 700.0 640.0 C733.3 638.7 775.8 635.3 800.0 640.0 C824.2 644.7 837.5 663.3 845.0 668.0" stroke="#fff" stroke-width="2.4" fill="none" stroke-linecap="round" stroke-linejoin="round" stroke-opacity="0.95"/>
<path d="M398.0 566.0 C401.7 570.0 418.0 581.0 420.0 590.0 C422.0 599.0 406.7 611.7 410.0 620.0 C413.3 628.3 436.7 630.0 440.0 640.0 C443.3 650.0 425.0 670.0 430.0 680.0 C435.0 690.0 463.3 696.7 470.0 700.0" stroke="#fff" stroke-width="2.4" fill="none" stroke-linecap="round" stroke-linejoin="round" stroke-opacity="0.95"/>
<path d="M440.0 458.0 C445.0 460.0 460.0 463.0 470.0 470.0 C480.0 477.0 498.3 488.3 500.0 500.0 C501.7 511.7 490.0 530.0 480.0 540.0 C470.0 550.0 450.0 551.7 440.0 560.0 C430.0 568.3 423.3 585.0 420.0 590.0" stroke="#fff" stroke-width="2.4" fill="none" stroke-linecap="round" stroke-linejoin="round" stroke-opacity="0.95"/>
<path d="M318.0 640.0 C325.0 643.3 346.3 650.0 360.0 660.0 C373.7 670.0 386.7 690.0 400.0 700.0 C413.3 710.0 428.3 714.7 440.0 720.0 C451.7 725.3 465.0 730.0 470.0 732.0" stroke="#fff" stroke-width="2.4" fill="none" stroke-linecap="round" stroke-linejoin="round" stroke-opacity="0.95"/>
<path d="M286.0 696.0 C295.0 695.0 321.0 689.3 340.0 690.0 C359.0 690.7 390.0 698.3 400.0 700.0" stroke="#fff" stroke-width="2.4" fill="none" stroke-linecap="round" stroke-linejoin="round" stroke-opacity="0.95"/>
<path d="M288.0 760.0 C300.0 761.7 334.7 766.7 360.0 770.0 C385.3 773.3 418.3 778.7 440.0 780.0 C461.7 781.3 470.0 771.0 490.0 778.0 C510.0 785.0 535.0 816.0 560.0 822.0 C585.0 828.0 618.3 818.7 640.0 814.0 C661.7 809.3 681.7 797.3 690.0 794.0" stroke="#fff" stroke-width="2.4" fill="none" stroke-linecap="round" stroke-linejoin="round" stroke-opacity="0.95"/>
<path d="M440.0 806.0 C453.3 814.7 483.3 840.0 520.0 858.0 C556.7 876.0 636.7 904.7 660.0 914.0" stroke="#fff" stroke-width="2.4" fill="none" stroke-linecap="round" stroke-linejoin="round" stroke-opacity="0.95"/>
<path d="M490.0 778.0 C495.0 771.7 508.3 753.0 520.0 740.0 C531.7 727.0 553.3 706.7 560.0 700.0" stroke="#fff" stroke-width="2.4" fill="none" stroke-linecap="round" stroke-linejoin="round" stroke-opacity="0.95"/>
<path d="M560.0 696.0 C566.7 700.0 586.7 709.3 600.0 720.0 C613.3 730.7 626.7 746.7 640.0 760.0 C653.3 773.3 670.0 789.0 680.0 800.0 C690.0 811.0 696.7 821.7 700.0 826.0" stroke="#fff" stroke-width="2.4" fill="none" stroke-linecap="round" stroke-linejoin="round" stroke-opacity="0.95"/>
<path d="M744.0 742.0 C753.3 741.7 780.7 742.0 800.0 740.0 C819.3 738.0 840.8 731.7 860.0 730.0 C879.2 728.3 905.8 730.0 915.0 730.0" stroke="#fff" stroke-width="2.4" fill="none" stroke-linecap="round" stroke-linejoin="round" stroke-opacity="0.95"/>
<path d="M724.0 786.0 C733.3 786.7 762.3 787.7 780.0 790.0 C797.7 792.3 821.7 798.3 830.0 800.0" stroke="#fff" stroke-width="2.4" fill="none" stroke-linecap="round" stroke-linejoin="round" stroke-opacity="0.95"/>
<path d="M200.0 942.0 C214.0 937.0 260.7 917.0 284.0 912.0 C307.3 907.0 330.7 912.0 340.0 912.0" stroke="#fff" stroke-width="2.4" fill="none" stroke-linecap="round" stroke-linejoin="round" stroke-opacity="0.95"/>
<path d="M172.0 952.0 L284.0 912.0" stroke="#fff" stroke-width="2.4" fill="none" stroke-linecap="round" stroke-linejoin="round" stroke-opacity="0.95"/>
<path d="M340.0 912.0 C356.7 910.0 410.0 909.0 440.0 900.0 C470.0 891.0 506.7 865.0 520.0 858.0" stroke="#fff" stroke-width="2.4" fill="none" stroke-linecap="round" stroke-linejoin="round" stroke-opacity="0.95"/>
<path d="M440.0 940.0 C460.0 938.3 525.0 929.0 560.0 930.0 C595.0 931.0 635.0 943.3 650.0 946.0" stroke="#fff" stroke-width="2.4" fill="none" stroke-linecap="round" stroke-linejoin="round" stroke-opacity="0.95"/>
<path d="M380.0 1000.0 C386.7 993.3 400.0 968.3 420.0 960.0 C440.0 951.7 476.7 945.0 500.0 950.0 C523.3 955.0 543.3 981.7 560.0 990.0 C576.7 998.3 593.3 998.3 600.0 1000.0" stroke="#fff" stroke-width="2.4" fill="none" stroke-linecap="round" stroke-linejoin="round" stroke-opacity="0.95"/>
<path d="M40.0 371.0 C44.3 369.8 39.3 365.8 66.0 364.0 C92.7 362.2 164.3 361.3 200.0 360.0 C235.7 358.7 253.3 357.0 280.0 356.0 C306.7 355.0 333.3 355.7 360.0 354.0 C386.7 352.3 413.3 348.7 440.0 346.0 C466.7 343.3 493.3 341.0 520.0 338.0 C546.7 335.0 571.7 331.3 600.0 328.0 C628.3 324.7 666.7 317.7 690.0 318.0 C713.3 318.3 731.7 328.0 740.0 330.0" stroke="#fff" stroke-width="4.2" fill="none" stroke-linecap="round" stroke-linejoin="round"/>
<path d="M60.0 424.0 C85.0 422.7 172.7 417.8 210.0 416.0 C247.3 414.2 259.0 414.8 284.0 413.0 C309.0 411.2 342.0 407.2 360.0 405.0 C378.0 402.8 386.7 400.8 392.0 400.0" stroke="#fff" stroke-width="3.6" fill="none" stroke-linecap="round" stroke-linejoin="round"/>
<path d="M64.0 476.0 C77.3 475.3 112.7 473.5 144.0 472.0 C175.3 470.5 221.0 468.2 252.0 467.0 C283.0 465.8 307.0 465.8 330.0 465.0 C353.0 464.2 371.7 463.2 390.0 462.0 C408.3 460.8 431.7 458.7 440.0 458.0" stroke="#fff" stroke-width="4" fill="none" stroke-linecap="round" stroke-linejoin="round"/>
<path d="M42.0 372.0 C43.3 375.7 47.3 377.0 50.0 394.0 C52.7 411.0 55.0 444.0 58.0 474.0 C61.0 504.0 64.3 541.7 68.0 574.0 C71.7 606.3 78.0 647.7 80.0 668.0 C82.0 688.3 79.3 683.0 80.0 696.0 C80.7 709.0 80.7 735.0 84.0 746.0 C87.3 757.0 95.3 755.3 100.0 762.0 C104.7 768.7 108.7 777.0 112.0 786.0 C115.3 795.0 117.3 808.3 120.0 816.0 C122.7 823.7 126.3 820.3 128.0 832.0 C129.7 843.7 128.0 868.7 130.0 886.0 C132.0 903.3 136.7 917.0 140.0 936.0 C143.3 955.0 148.3 989.3 150.0 1000.0" stroke="#fff" stroke-width="4" fill="none" stroke-linecap="round" stroke-linejoin="round"/>
<path d="M145.0 472.0 C145.5 485.7 146.3 521.3 148.0 554.0 C149.7 586.7 153.3 643.7 155.0 668.0 C156.7 692.3 157.5 694.7 158.0 700.0" stroke="#fff" stroke-width="4" fill="none" stroke-linecap="round" stroke-linejoin="round"/>
<path d="M298.0 193.0 C298.2 199.2 299.0 218.8 299.0 230.0 C299.0 241.2 299.0 250.8 298.0 260.0 C297.0 269.2 295.5 277.5 293.0 285.0 C290.5 292.5 284.8 292.5 283.0 305.0 C281.2 317.5 282.2 342.0 282.0 360.0 C281.8 378.0 285.3 401.3 282.0 413.0 C278.7 424.7 266.7 423.8 262.0 430.0 C257.3 436.2 255.7 443.8 254.0 450.0 C252.3 456.2 251.8 453.0 252.0 467.0 C252.2 481.0 253.7 509.5 255.0 534.0 C256.3 558.5 258.7 591.7 260.0 614.0 C261.3 636.3 262.2 638.0 263.0 668.0 C263.8 698.0 261.5 765.7 265.0 794.0 C268.5 822.3 280.2 822.7 284.0 838.0 C287.8 853.3 287.7 859.0 288.0 886.0 C288.3 913.0 286.3 981.0 286.0 1000.0" stroke="#fff" stroke-width="5" fill="none" stroke-linecap="round" stroke-linejoin="round"/>
<path d="M286.0 696.0 C285.7 712.3 283.7 769.0 284.0 794.0 C284.3 819.0 287.3 837.3 288.0 846.0" stroke="#fff" stroke-width="4.5" fill="none" stroke-linecap="round" stroke-linejoin="round"/>
<path d="M82.0 691.0 C87.0 691.0 103.7 689.0 112.0 691.0 C120.3 693.0 106.7 702.2 132.0 703.0 C157.3 703.8 238.3 697.2 264.0 696.0 C289.7 694.8 282.3 696.0 286.0 696.0" stroke="#fff" stroke-width="4.5" fill="none" stroke-linecap="round" stroke-linejoin="round"/>
<path d="M258.0 150.0 C260.8 153.7 268.3 164.8 275.0 172.0 C281.7 179.2 290.5 188.8 298.0 193.0 C305.5 197.2 312.2 196.2 320.0 197.0 C327.8 197.8 336.7 198.8 345.0 198.0 C353.3 197.2 360.8 193.8 370.0 192.0 C379.2 190.2 392.5 187.3 400.0 187.0 C407.5 186.7 408.3 185.3 415.0 190.0 C421.7 194.7 435.8 210.8 440.0 215.0" stroke="#fff" stroke-width="5.5" fill="none" stroke-linecap="round" stroke-linejoin="round"/>
<path d="M560.0 160.0 C562.5 175.0 570.0 221.7 575.0 250.0 C580.0 278.3 585.8 305.0 590.0 330.0 C594.2 355.0 597.3 380.8 600.0 400.0 C602.7 419.2 605.0 437.5 606.0 445.0" stroke="#fff" stroke-width="4.5" fill="none" stroke-linecap="round" stroke-linejoin="round"/>
<path d="M606.0 445.0 C611.7 439.2 624.3 425.0 640.0 410.0 C655.7 395.0 681.7 371.3 700.0 355.0 C718.3 338.7 736.0 323.8 750.0 312.0 C764.0 300.2 778.3 288.7 784.0 284.0" stroke="#fff" stroke-width="5" fill="none" stroke-linecap="round" stroke-linejoin="round"/>
<path d="M606.0 445.0 C598.3 452.5 574.3 475.8 560.0 490.0 C545.7 504.2 531.7 518.3 520.0 530.0 C508.3 541.7 498.3 548.3 490.0 560.0 C481.7 571.7 478.3 586.7 470.0 600.0 C461.7 613.3 445.0 633.3 440.0 640.0" stroke="#fff" stroke-width="4" fill="none" stroke-linecap="round" stroke-linejoin="round"/>
<path d="M676.0 166.0 C678.3 168.3 685.0 174.7 690.0 180.0 C695.0 185.3 701.0 192.0 706.0 198.0 C711.0 204.0 714.3 209.0 720.0 216.0 C725.7 223.0 733.3 231.7 740.0 240.0 C746.7 248.3 754.0 258.0 760.0 266.0 C766.0 274.0 771.7 280.7 776.0 288.0 C780.3 295.3 785.3 301.3 786.0 310.0 C786.7 318.7 781.0 335.0 780.0 340.0" stroke="#fff" stroke-width="4.5" fill="none" stroke-linecap="round" stroke-linejoin="round"/>
<path d="M780.0 340.0 C779.3 346.7 775.3 365.0 776.0 380.0 C776.7 395.0 780.7 410.0 784.0 430.0 C787.3 450.0 792.3 478.3 796.0 500.0 C799.7 521.7 803.3 540.0 806.0 560.0 C808.7 580.0 813.0 600.0 812.0 620.0 C811.0 640.0 807.0 663.3 800.0 680.0 C793.0 696.7 779.3 709.7 770.0 720.0 C760.7 730.3 751.7 731.0 744.0 742.0 C736.3 753.0 729.7 772.0 724.0 786.0 C718.3 800.0 717.3 812.7 710.0 826.0 C702.7 839.3 688.3 851.0 680.0 866.0 C671.7 881.0 665.0 902.7 660.0 916.0 C655.0 929.3 650.0 932.0 650.0 946.0 C650.0 960.0 658.3 991.0 660.0 1000.0" stroke="#fff" stroke-width="3.6" fill="none" stroke-linecap="round" stroke-linejoin="round"/>
<path d="M778.0 296.0 C773.3 301.7 759.7 318.5 750.0 330.0 C740.3 341.5 730.0 353.3 720.0 365.0 C710.0 376.7 700.0 389.2 690.0 400.0 C680.0 410.8 668.3 421.3 660.0 430.0 C651.7 438.7 643.3 445.3 640.0 452.0 C636.7 458.7 635.0 465.3 640.0 470.0 C645.0 474.7 661.7 475.0 670.0 480.0 C678.3 485.0 686.0 486.7 690.0 500.0 C694.0 513.3 694.0 540.0 694.0 560.0 C694.0 580.0 692.3 600.0 690.0 620.0 C687.7 640.0 682.0 662.3 680.0 680.0 C678.0 697.7 675.3 709.7 678.0 726.0 C680.7 742.3 691.0 762.0 696.0 778.0 C701.0 794.0 704.0 810.7 708.0 822.0 C712.0 833.3 716.3 837.0 720.0 846.0 C723.7 855.0 726.7 866.0 730.0 876.0 C733.3 886.0 737.3 894.3 740.0 906.0 C742.7 917.7 743.7 930.3 746.0 946.0 C748.3 961.7 752.7 991.0 754.0 1000.0" stroke="#fff" stroke-width="6.5" fill="none" stroke-linecap="round" stroke-linejoin="round"/>
<path d="M600.0 448.0 C603.3 451.7 613.3 466.3 620.0 470.0 C626.7 473.7 636.7 470.0 640.0 470.0" stroke="#fff" stroke-width="5" fill="none" stroke-linecap="round" stroke-linejoin="round"/>
<path d="M760.0 400.0 C756.7 408.3 745.0 430.0 740.0 450.0 C735.0 470.0 732.3 495.0 730.0 520.0 C727.7 545.0 731.0 576.7 726.0 600.0 C721.0 623.3 711.7 643.8 700.0 660.0 C688.3 676.2 683.2 689.3 656.0 697.0 C628.8 704.7 568.8 699.5 537.0 706.0 C505.2 712.5 483.0 725.7 465.0 736.0 C447.0 746.3 437.0 756.7 429.0 768.0 C421.0 779.3 420.0 792.5 417.0 804.0 C414.0 815.5 416.3 827.0 411.0 837.0 C405.7 847.0 393.8 856.0 385.0 864.0 C376.2 872.0 365.5 877.2 358.0 885.0 C350.5 892.8 344.5 900.7 340.0 911.0 C335.5 921.3 333.0 932.2 331.0 947.0 C329.0 961.8 328.5 991.2 328.0 1000.0" stroke="#fff" stroke-width="6.5" fill="none" stroke-linecap="round" stroke-linejoin="round"/>
<path d="M288.0 886.0 C291.7 883.3 299.3 868.3 310.0 870.0 C320.7 871.7 345.0 891.7 352.0 896.0" stroke="#fff" stroke-width="4" fill="none" stroke-linecap="round" stroke-linejoin="round"/>
</g>
<path d="M111.0 752.0 C112.5 748.7 117.3 736.5 120.0 732.0 C122.7 727.5 124.3 723.7 127.0 725.0 C129.7 726.3 131.8 736.7 136.0 740.0 C140.2 743.3 148.3 743.3 152.0 745.0 C155.7 746.7 158.0 747.2 158.0 750.0 C158.0 752.8 155.0 758.8 152.0 762.0 C149.0 765.2 143.7 769.3 140.0 769.0 C136.3 768.7 133.3 762.5 130.0 760.0 C126.7 757.5 123.2 755.3 120.0 754.0 C116.8 752.7 112.5 752.3 111.0 752.0Z" fill="#cbd3d5"/>
<path d="M160.0 748.0 C162.3 746.7 170.7 742.2 174.0 740.0 C177.3 737.8 178.5 734.5 180.0 735.0 C181.5 735.5 180.5 741.8 183.0 743.0 C185.5 744.2 191.0 740.8 195.0 742.0 C199.0 743.2 205.0 748.0 207.0 750.0 C209.0 752.0 208.8 754.2 207.0 754.0 C205.2 753.8 199.5 749.0 196.0 749.0 C192.5 749.0 190.0 753.7 186.0 754.0 C182.0 754.3 176.0 751.0 172.0 751.0 C168.0 751.0 164.0 754.5 162.0 754.0 C160.0 753.5 160.3 749.0 160.0 748.0Z" fill="#cbd3d5"/>
<path d="M109.0 760.0 C110.2 759.8 112.8 757.3 116.0 759.0 C119.2 760.7 124.0 765.8 128.0 770.0 C132.0 774.2 134.7 780.5 140.0 784.0 C145.3 787.5 155.0 787.7 160.0 791.0 C165.0 794.3 166.0 798.8 170.0 804.0 C174.0 809.2 179.3 817.7 184.0 822.0 C188.7 826.3 195.2 827.0 198.0 830.0 C200.8 833.0 201.5 836.0 201.0 840.0 C200.5 844.0 195.2 850.5 195.0 854.0 C194.8 857.5 198.7 857.0 200.0 861.0 C201.3 865.0 203.0 874.2 203.0 878.0 C203.0 881.8 202.2 885.3 200.0 884.0 C197.8 882.7 192.3 874.3 190.0 870.0 C187.7 865.7 188.3 861.3 186.0 858.0 C183.7 854.7 179.0 853.7 176.0 850.0 C173.0 846.3 171.3 840.3 168.0 836.0 C164.7 831.7 160.7 827.3 156.0 824.0 C151.3 820.7 144.3 817.7 140.0 816.0 C135.7 814.3 132.0 816.0 130.0 814.0 C128.0 812.0 130.0 808.0 128.0 804.0 C126.0 800.0 121.2 795.3 118.0 790.0 C114.8 784.7 110.5 777.0 109.0 772.0 C107.5 767.0 109.0 762.0 109.0 760.0Z" fill="#cbd3d5"/>
<path d="M239.0 0.0 C239.7 10.0 241.7 43.3 243.0 60.0 C244.3 76.7 245.5 87.5 247.0 100.0 C248.5 112.5 250.2 126.7 252.0 135.0 C253.8 143.3 257.0 147.5 258.0 150.0" stroke="#fff" stroke-width="8" fill="none" stroke-linecap="round" stroke-linejoin="round"/>
<path d="M778.0 294.0 L800.0 266.0 L840.0 216.0 L868.0 178.0 L886.0 152.0" stroke="#f4f6f6" stroke-width="9" fill="none" stroke-linecap="round" stroke-linejoin="round"/>
<path d="M778.0 294.0 L800.0 266.0 L840.0 216.0 L868.0 178.0 L886.0 152.0" stroke="#fff" stroke-width="6" fill="none" stroke-linecap="round" stroke-linejoin="round"/>
<path d="M886.0 152.0 C888.0 148.3 892.0 138.0 898.0 130.0 C904.0 122.0 913.0 111.2 922.0 104.0 C931.0 96.8 941.7 91.7 952.0 87.0 C962.3 82.3 966.8 80.5 984.0 76.0 C1001.2 71.5 1031.2 64.5 1055.0 60.0 C1078.8 55.5 1107.2 52.7 1127.0 49.0 C1146.8 45.3 1158.2 41.7 1174.0 38.0 C1189.8 34.3 1204.0 30.8 1222.0 27.0 C1240.0 23.2 1266.7 18.8 1282.0 15.5 C1297.3 12.2 1308.7 8.4 1314.0 7.0" stroke="#f4f6f6" stroke-width="11" fill="none" stroke-linecap="round" stroke-linejoin="round"/>
<path d="M886.0 152.0 C888.0 148.3 892.0 138.0 898.0 130.0 C904.0 122.0 913.0 111.2 922.0 104.0 C931.0 96.8 941.7 91.7 952.0 87.0 C962.3 82.3 966.8 80.5 984.0 76.0 C1001.2 71.5 1031.2 64.5 1055.0 60.0 C1078.8 55.5 1107.2 52.7 1127.0 49.0 C1146.8 45.3 1158.2 41.7 1174.0 38.0 C1189.8 34.3 1204.0 30.8 1222.0 27.0 C1240.0 23.2 1266.7 18.8 1282.0 15.5 C1297.3 12.2 1308.7 8.4 1314.0 7.0" stroke="#fff" stroke-width="7" fill="none" stroke-linecap="round" stroke-linejoin="round"/>
<path d="M835.0 8.0 C837.5 13.3 844.2 28.0 850.0 40.0 C855.8 52.0 866.7 73.3 870.0 80.0" stroke="#fff" stroke-width="2" fill="none" stroke-linecap="round" stroke-linejoin="round" stroke-opacity="0.9"/>
<path d="M850.0 40.0 L900.0 20.0" stroke="#fff" stroke-width="2" fill="none" stroke-linecap="round" stroke-linejoin="round" stroke-opacity="0.9"/>
<path d="M860.0 62.0 L910.0 44.0" stroke="#fff" stroke-width="2" fill="none" stroke-linecap="round" stroke-linejoin="round" stroke-opacity="0.9"/>
<path d="M875.0 0.0 L905.0 50.0" stroke="#fff" stroke-width="2" fill="none" stroke-linecap="round" stroke-linejoin="round" stroke-opacity="0.9"/>
<path d="M874.0 92.0 C873.7 95.0 869.3 104.0 872.0 110.0 C874.7 116.0 887.0 125.0 890.0 128.0" stroke="#fff" stroke-width="2" fill="none" stroke-linecap="round" stroke-linejoin="round" stroke-opacity="0.9"/>
<path d="M1091.1 166.7 C1095.5 164.7 1106.6 155.6 1117.3 154.8 C1128.0 154.0 1147.5 162.3 1155.4 161.9 C1163.4 161.5 1157.8 155.2 1165.0 152.4 C1172.1 149.6 1184.8 144.4 1198.3 145.2 C1211.8 146.0 1226.6 153.6 1245.9 157.1 C1265.2 160.7 1302.7 165.1 1314.0 166.7" stroke="#fff" stroke-width="2.2" fill="none" stroke-linecap="round" stroke-linejoin="round" stroke-opacity="0.9"/>
<path d="M1157.8 164.3 C1159.0 167.9 1150.3 176.6 1165.0 185.7 C1179.6 194.8 1230.0 211.1 1245.9 219.0 C1261.8 227.0 1248.8 232.5 1260.2 233.3 C1271.5 234.1 1305.0 225.4 1314.0 223.8" stroke="#fff" stroke-width="2.2" fill="none" stroke-linecap="round" stroke-linejoin="round" stroke-opacity="0.9"/>
<path d="M1212.6 133.3 C1213.4 138.9 1211.8 153.2 1217.3 166.7 C1222.9 180.2 1241.1 206.3 1245.9 214.3" stroke="#fff" stroke-width="2.2" fill="none" stroke-linecap="round" stroke-linejoin="round" stroke-opacity="0.9"/>
<path d="M1257.8 142.9 C1259.0 147.6 1259.0 162.7 1265.0 171.4 C1270.9 180.2 1285.3 190.9 1293.5 195.2 C1301.7 199.6 1310.6 197.2 1314.0 197.6" stroke="#fff" stroke-width="2.2" fill="none" stroke-linecap="round" stroke-linejoin="round" stroke-opacity="0.9"/>
<path d="M1269.7 288.1 C1269.3 296.4 1262.6 329.4 1267.3 338.1 C1272.1 346.8 1293.1 340.1 1298.3 340.5" stroke="#fff" stroke-width="2.2" fill="none" stroke-linecap="round" stroke-linejoin="round" stroke-opacity="0.9"/>
<path d="M1269.7 319.0 L1314.0 316.7" stroke="#fff" stroke-width="2.2" fill="none" stroke-linecap="round" stroke-linejoin="round" stroke-opacity="0.9"/>
<path d="M1314.0 285.7 L1272.1 289.3" stroke="#fff" stroke-width="2.2" fill="none" stroke-linecap="round" stroke-linejoin="round" stroke-opacity="0.9"/>
<path d="M926 728L950 722M930 738L949 734M927 762L948 757M918 790L934 782M843 572L856 570M846 596L860 594M690 180L700 170M697 188L708 178M704 197L716 187M711 206L724 196M728 226L740 217M735 236L748 226M660 156L664 140M676 166L684 152M640 150L636 132M600 150L586 130M610 150L598 134M779 338L793 335M773 356L788 353M782 402L797 398M792 456L807 453" stroke="#f4f6f6" stroke-width="2.2" fill="none"/>
</svg>
<svg class="abs" style="left:10px;top:938px" width="200" height="52" viewBox="0 0 200 52">
  <circle cx="25" cy="26.7" r="19" fill="#fff" fill-opacity=".92" stroke="#8e9494" stroke-opacity=".85" stroke-width="3.6"/>
  <path d="M16.2 35.2C16.2 26 16.5 19 23 16.600C30 14.500 36.500 18.500 36.500 25C36.500 32 30 35.200 16.200 35.200Z" fill="#8e9494" fill-opacity=".9"/>
  <path d="M28.5 19.3l1.900 3.800 3.800 1.900-3.800 1.900-1.900 3.800-1.900-3.800-3.800-1.900 3.800-1.900z" fill="#fff"/>
  <text x="50" y="36.500" font-family="Liberation Sans, sans-serif" font-weight="bold" font-size="33" textLength="125" lengthAdjust="spacingAndGlyphs" fill="#fff" stroke="#8e9494" stroke-opacity=".85" stroke-width="5" stroke-linejoin="round" paint-order="stroke">mapbox</text>
</svg>
<div class="abs" style="left:765px;top:960px;width:547px;height:40px;background:rgba(255,255,255,.5);"></div>
<div class="abs" id="att1" style="transform:scaleX(1.023);left:775.3px;top:964px;font-size:24px;line-height:34px;color:rgba(0,0,0,.75);white-space:nowrap;transform-origin:0 50%;">© Mapbox © OpenStreetMap</div>
<div class="abs" id="att2" style="left:1104.4px;top:964px;font-size:24px;line-height:34px;font-weight:bold;color:rgba(0,0,0,.75);white-space:nowrap;transform-origin:0 50%;">Improve this map</div>

<svg class="abs" style="left:0;top:0" width="1312" height="1000" viewBox="0 0 1312 1000">
<g font-family="Liberation Sans, sans-serif">
<text x="498" y="23" font-size="22.5" textLength="144" lengthAdjust="spacingAndGlyphs" font-weight="normal"  fill="none" stroke="#fff" stroke-width="3" stroke-opacity="0.9" stroke-linejoin="round">Alcatraz Island</text>
<text x="498" y="23" font-size="22.5" textLength="144" lengthAdjust="spacingAndGlyphs" font-weight="normal"  fill="#8a8e90">Alcatraz Island</text>
<text x="188" y="61" font-size="22.5" textLength="115" lengthAdjust="spacingAndGlyphs" font-weight="normal"  fill="none" stroke="#fff" stroke-width="3" stroke-opacity="0.9" stroke-linejoin="round">Golden Gate</text>
<text x="188" y="61" font-size="22.5" textLength="115" lengthAdjust="spacingAndGlyphs" font-weight="normal"  fill="#8a8e90">Golden Gate</text>
<text x="213" y="86" font-size="22.5" textLength="65" lengthAdjust="spacingAndGlyphs" font-weight="normal"  fill="none" stroke="#fff" stroke-width="3" stroke-opacity="0.9" stroke-linejoin="round">Bridge</text>
<text x="213" y="86" font-size="22.5" textLength="65" lengthAdjust="spacingAndGlyphs" font-weight="normal"  fill="#8a8e90">Bridge</text>
<text x="288" y="230" font-size="22.5" textLength="78" lengthAdjust="spacingAndGlyphs" font-weight="normal"  fill="none" stroke="#fff" stroke-width="3" stroke-opacity="0.9" stroke-linejoin="round">Presidio</text>
<text x="288" y="230" font-size="22.5" textLength="78" lengthAdjust="spacingAndGlyphs" font-weight="normal"  fill="#8a8e90">Presidio</text>
<text x="141" y="446" font-size="22.5" textLength="167" lengthAdjust="spacingAndGlyphs" font-weight="normal"  fill="none" stroke="#fff" stroke-width="3" stroke-opacity="0.9" stroke-linejoin="round">Golden Gate Park</text>
<text x="141" y="446" font-size="22.5" textLength="167" lengthAdjust="spacingAndGlyphs" font-weight="normal"  fill="#8a8e90">Golden Gate Park</text>
<text x="457" y="382" font-size="44.5" textLength="261" lengthAdjust="spacingAndGlyphs" font-weight="normal"  fill="none" stroke="#fff" stroke-width="2" stroke-opacity="0.5" stroke-linejoin="round">San Francisco</text>
<text x="457" y="382" font-size="44.5" textLength="261" lengthAdjust="spacingAndGlyphs" font-weight="normal"  fill="#5d6163">San Francisco</text>
<text x="797.6" y="635.7" font-size="22.5" textLength="106" lengthAdjust="spacingAndGlyphs" font-weight="normal"  fill="none" stroke="#fff" stroke-width="3" stroke-opacity="0.9" stroke-linejoin="round">Port of San</text>
<text x="797.6" y="635.7" font-size="22.5" textLength="106" lengthAdjust="spacingAndGlyphs" font-weight="normal"  fill="#8a8e90">Port of San</text>
<text x="803.6" y="661" font-size="22.5" textLength="94" lengthAdjust="spacingAndGlyphs" font-weight="normal"  fill="none" stroke="#fff" stroke-width="3" stroke-opacity="0.9" stroke-linejoin="round">Francisco</text>
<text x="803.6" y="661" font-size="22.5" textLength="94" lengthAdjust="spacingAndGlyphs" font-weight="normal"  fill="#8a8e90">Francisco</text>
<text x="619" y="733" font-size="22.5" textLength="137" lengthAdjust="spacingAndGlyphs" font-weight="normal"  fill="none" stroke="#fff" stroke-width="3" stroke-opacity="0.7" stroke-linejoin="round">Silver Terrace</text>
<text x="619" y="733" font-size="22.5" textLength="137" lengthAdjust="spacingAndGlyphs" font-weight="normal"  fill="#a9aeb0">Silver Terrace</text>
<text x="1200.7" y="822" font-size="27" textLength="150" lengthAdjust="spacingAndGlyphs" font-weight="normal" font-style="italic" fill="none" stroke="#d4dbdc" stroke-width="2" stroke-opacity="0.8" stroke-linejoin="round">San Francisco</text>
<text x="1200.7" y="822" font-size="27" textLength="150" lengthAdjust="spacingAndGlyphs" font-weight="normal" font-style="italic" fill="#8f9a9c">San Francisco</text>
<text x="1256.4" y="853" font-size="27" textLength="39" lengthAdjust="spacingAndGlyphs" font-weight="normal" font-style="italic" fill="none" stroke="#d4dbdc" stroke-width="2" stroke-opacity="0.8" stroke-linejoin="round">Bay</text>
<text x="1256.4" y="853" font-size="27" textLength="39" lengthAdjust="spacingAndGlyphs" font-weight="normal" font-style="italic" fill="#8f9a9c">Bay</text>
</g>
<g fill="#cf140c" fill-opacity=".56">
<circle cx="678.0" cy="597.7" r="6.4"/><circle cx="681.7" cy="473.7" r="6.4"/><circle cx="759.3" cy="548.8" r="6.4"/><circle cx="773.3" cy="595.8" r="6.4"/><circle cx="748.2" cy="514.1" r="6.4"/><circle cx="775.1" cy="424.7" r="6.4"/><circle cx="748.6" cy="580.1" r="6.4"/><circle cx="779.6" cy="700.6" r="6.4"/><circle cx="632.5" cy="410.1" r="6.4"/><circle cx="667.0" cy="505.0" r="6.4"/><circle cx="789.0" cy="558.3" r="6.4"/><circle cx="654.1" cy="377.5" r="6.4"/><circle cx="644.9" cy="704.1" r="6.4"/><circle cx="609.0" cy="557.7" r="6.4"/><circle cx="716.1" cy="716.9" r="6.4"/><circle cx="696.7" cy="398.4" r="6.4"/><circle cx="772.2" cy="511.7" r="6.4"/><circle cx="793.7" cy="662.9" r="6.4"/><circle cx="724.9" cy="326.1" r="6.4"/><circle cx="786.9" cy="429.2" r="6.4"/><circle cx="653.4" cy="331.3" r="6.4"/><circle cx="754.7" cy="410.6" r="6.4"/><circle cx="740.7" cy="586.2" r="6.4"/><circle cx="774.8" cy="603.2" r="6.4"/><circle cx="687.0" cy="673.9" r="6.4"/><circle cx="779.0" cy="498.5" r="6.4"/><circle cx="750.6" cy="618.5" r="6.4"/><circle cx="725.0" cy="692.8" r="6.4"/><circle cx="627.3" cy="458.8" r="6.4"/><circle cx="691.4" cy="476.3" r="6.4"/><circle cx="611.6" cy="615.7" r="6.4"/><circle cx="753.2" cy="542.4" r="6.4"/><circle cx="729.1" cy="607.3" r="6.4"/><circle cx="688.0" cy="562.6" r="6.4"/><circle cx="781.6" cy="521.1" r="6.4"/><circle cx="656.6" cy="465.1" r="6.4"/><circle cx="708.4" cy="659.6" r="6.4"/><circle cx="667.9" cy="578.9" r="6.4"/><circle cx="759.8" cy="556.8" r="6.4"/><circle cx="656.1" cy="619.3" r="6.4"/><circle cx="745.3" cy="442.7" r="6.4"/><circle cx="640.7" cy="506.1" r="6.4"/><circle cx="681.8" cy="511.6" r="6.4"/><circle cx="701.7" cy="664.0" r="6.4"/><circle cx="667.4" cy="614.5" r="6.4"/><circle cx="732.0" cy="700.2" r="6.4"/><circle cx="691.3" cy="549.7" r="6.4"/><circle cx="726.5" cy="626.8" r="6.4"/><circle cx="737.8" cy="616.8" r="6.4"/><circle cx="786.9" cy="376.5" r="6.4"/><circle cx="710.1" cy="350.0" r="6.4"/><circle cx="698.0" cy="430.6" r="6.4"/><circle cx="759.9" cy="582.5" r="6.4"/><circle cx="617.0" cy="673.8" r="6.4"/><circle cx="724.4" cy="539.6" r="6.4"/><circle cx="749.6" cy="429.3" r="6.4"/><circle cx="708.8" cy="645.9" r="6.4"/><circle cx="719.9" cy="720.0" r="6.4"/><circle cx="702.3" cy="677.1" r="6.4"/><circle cx="626.0" cy="653.0" r="6.4"/><circle cx="686.0" cy="516.7" r="6.4"/><circle cx="636.1" cy="556.0" r="6.4"/><circle cx="776.4" cy="671.1" r="6.4"/><circle cx="685.3" cy="332.0" r="6.4"/><circle cx="640.6" cy="682.0" r="6.4"/><circle cx="711.0" cy="641.8" r="6.4"/><circle cx="730.7" cy="344.2" r="6.4"/><circle cx="746.4" cy="452.2" r="6.4"/><circle cx="793.3" cy="570.0" r="6.4"/><circle cx="672.9" cy="450.6" r="6.4"/><circle cx="780.1" cy="656.4" r="6.4"/><circle cx="746.6" cy="644.8" r="6.4"/><circle cx="705.7" cy="491.7" r="6.4"/><circle cx="603.4" cy="394.8" r="6.4"/><circle cx="787.7" cy="593.1" r="6.4"/><circle cx="701.6" cy="599.4" r="6.4"/><circle cx="750.6" cy="415.7" r="6.4"/><circle cx="746.4" cy="548.5" r="6.4"/><circle cx="660.2" cy="374.9" r="6.4"/><circle cx="601.0" cy="560.1" r="6.4"/><circle cx="702.6" cy="599.4" r="6.4"/><circle cx="619.1" cy="502.4" r="6.4"/><circle cx="767.3" cy="577.5" r="6.4"/><circle cx="789.7" cy="552.3" r="6.4"/><circle cx="669.5" cy="639.4" r="6.4"/><circle cx="716.2" cy="397.1" r="6.4"/><circle cx="631.8" cy="520.9" r="6.4"/><circle cx="696.3" cy="544.5" r="6.4"/><circle cx="709.9" cy="547.4" r="6.4"/><circle cx="693.2" cy="332.2" r="6.4"/><circle cx="762.7" cy="679.1" r="6.4"/><circle cx="764.3" cy="492.6" r="6.4"/><circle cx="765.8" cy="376.1" r="6.4"/><circle cx="662.3" cy="315.6" r="6.4"/><circle cx="614.6" cy="599.1" r="6.4"/><circle cx="772.1" cy="547.5" r="6.4"/><circle cx="707.4" cy="610.5" r="6.4"/><circle cx="691.4" cy="630.5" r="6.4"/><circle cx="672.9" cy="681.3" r="6.4"/><circle cx="784.5" cy="657.2" r="6.4"/><circle cx="667.1" cy="652.1" r="6.4"/><circle cx="754.9" cy="690.5" r="6.4"/><circle cx="735.8" cy="529.3" r="6.4"/><circle cx="679.6" cy="623.9" r="6.4"/><circle cx="710.6" cy="301.4" r="6.4"/><circle cx="624.6" cy="606.3" r="6.4"/><circle cx="780.8" cy="512.8" r="6.4"/><circle cx="681.0" cy="308.5" r="6.4"/><circle cx="631.3" cy="310.6" r="6.4"/><circle cx="714.0" cy="558.4" r="6.4"/><circle cx="789.3" cy="626.3" r="6.4"/><circle cx="699.8" cy="521.8" r="6.4"/><circle cx="685.1" cy="474.3" r="6.4"/><circle cx="702.1" cy="407.0" r="6.4"/><circle cx="797.7" cy="574.1" r="6.4"/><circle cx="699.0" cy="420.2" r="6.4"/><circle cx="728.4" cy="314.4" r="6.4"/><circle cx="678.7" cy="473.9" r="6.4"/><circle cx="767.5" cy="612.8" r="6.4"/><circle cx="705.5" cy="393.3" r="6.4"/><circle cx="692.0" cy="511.2" r="6.4"/><circle cx="619.7" cy="317.8" r="6.4"/><circle cx="663.4" cy="409.9" r="6.4"/><circle cx="648.6" cy="536.8" r="6.4"/><circle cx="775.4" cy="459.0" r="6.4"/><circle cx="616.1" cy="558.1" r="6.4"/><circle cx="750.3" cy="713.0" r="6.4"/><circle cx="773.8" cy="497.6" r="6.4"/><circle cx="773.6" cy="359.3" r="6.4"/><circle cx="682.1" cy="523.9" r="6.4"/><circle cx="609.0" cy="559.7" r="6.4"/><circle cx="782.8" cy="627.5" r="6.4"/><circle cx="743.6" cy="456.7" r="6.4"/><circle cx="794.3" cy="449.0" r="6.4"/><circle cx="623.2" cy="628.8" r="6.4"/><circle cx="625.3" cy="642.7" r="6.4"/><circle cx="703.8" cy="567.6" r="6.4"/><circle cx="710.4" cy="638.9" r="6.4"/><circle cx="629.1" cy="514.3" r="6.4"/><circle cx="702.4" cy="474.1" r="6.4"/><circle cx="694.9" cy="357.8" r="6.4"/><circle cx="713.0" cy="305.3" r="6.4"/><circle cx="701.1" cy="567.3" r="6.4"/><circle cx="768.5" cy="486.2" r="6.4"/><circle cx="651.1" cy="415.6" r="6.4"/><circle cx="746.8" cy="598.3" r="6.4"/><circle cx="621.9" cy="522.9" r="6.4"/><circle cx="644.8" cy="546.4" r="6.4"/><circle cx="729.3" cy="582.2" r="6.4"/><circle cx="680.2" cy="575.9" r="6.4"/><circle cx="716.6" cy="636.7" r="6.4"/><circle cx="709.7" cy="366.2" r="6.4"/><circle cx="628.8" cy="616.2" r="6.4"/><circle cx="773.5" cy="505.3" r="6.4"/><circle cx="766.8" cy="441.6" r="6.4"/><circle cx="697.6" cy="633.4" r="6.4"/><circle cx="600.2" cy="617.0" r="6.4"/><circle cx="728.3" cy="498.4" r="6.4"/><circle cx="708.0" cy="519.5" r="6.4"/><circle cx="766.1" cy="576.0" r="6.4"/><circle cx="645.1" cy="419.9" r="6.4"/><circle cx="776.1" cy="603.3" r="6.4"/><circle cx="746.4" cy="558.1" r="6.4"/><circle cx="642.2" cy="590.0" r="6.4"/><circle cx="695.4" cy="508.1" r="6.4"/><circle cx="665.8" cy="679.0" r="6.4"/><circle cx="719.0" cy="633.5" r="6.4"/><circle cx="700.7" cy="550.5" r="6.4"/><circle cx="625.5" cy="576.7" r="6.4"/><circle cx="714.8" cy="560.1" r="6.4"/><circle cx="641.4" cy="654.3" r="6.4"/><circle cx="675.9" cy="430.1" r="6.4"/><circle cx="625.3" cy="517.9" r="6.4"/><circle cx="748.6" cy="422.7" r="6.4"/><circle cx="629.5" cy="523.6" r="6.4"/><circle cx="731.7" cy="674.6" r="6.4"/><circle cx="785.8" cy="640.3" r="6.4"/><circle cx="735.6" cy="559.1" r="6.4"/><circle cx="709.3" cy="482.8" r="6.4"/><circle cx="647.6" cy="395.3" r="6.4"/><circle cx="631.2" cy="616.9" r="6.4"/><circle cx="714.6" cy="530.9" r="6.4"/><circle cx="688.3" cy="658.2" r="6.4"/><circle cx="771.7" cy="499.7" r="6.4"/><circle cx="793.1" cy="498.2" r="6.4"/><circle cx="768.2" cy="377.4" r="6.4"/><circle cx="751.7" cy="654.7" r="6.4"/><circle cx="734.7" cy="498.6" r="6.4"/><circle cx="713.8" cy="478.0" r="6.4"/><circle cx="753.9" cy="532.7" r="6.4"/><circle cx="794.5" cy="465.3" r="6.4"/><circle cx="657.1" cy="622.4" r="6.4"/><circle cx="669.3" cy="631.1" r="6.4"/><circle cx="736.0" cy="509.4" r="6.4"/><circle cx="724.4" cy="690.5" r="6.4"/><circle cx="638.1" cy="595.6" r="6.4"/><circle cx="781.5" cy="479.4" r="6.4"/><circle cx="622.9" cy="437.6" r="6.4"/><circle cx="659.9" cy="649.8" r="6.4"/><circle cx="720.2" cy="461.4" r="6.4"/><circle cx="710.8" cy="575.9" r="6.4"/><circle cx="705.1" cy="583.6" r="6.4"/><circle cx="676.0" cy="362.9" r="6.4"/><circle cx="722.9" cy="676.0" r="6.4"/><circle cx="677.5" cy="455.5" r="6.4"/><circle cx="766.3" cy="415.7" r="6.4"/><circle cx="703.8" cy="421.3" r="6.4"/><circle cx="711.5" cy="633.5" r="6.4"/><circle cx="612.1" cy="458.0" r="6.4"/><circle cx="619.4" cy="516.0" r="6.4"/><circle cx="775.3" cy="317.2" r="6.4"/><circle cx="768.0" cy="517.0" r="6.4"/><circle cx="769.4" cy="587.2" r="6.4"/><circle cx="765.7" cy="497.3" r="6.4"/><circle cx="734.2" cy="661.9" r="6.4"/><circle cx="763.3" cy="599.6" r="6.4"/><circle cx="704.8" cy="723.8" r="6.4"/><circle cx="661.2" cy="438.5" r="6.4"/><circle cx="675.2" cy="434.6" r="6.4"/><circle cx="677.9" cy="614.5" r="6.4"/><circle cx="754.2" cy="339.6" r="6.4"/><circle cx="763.3" cy="547.9" r="6.4"/><circle cx="674.9" cy="470.7" r="6.4"/><circle cx="623.9" cy="586.7" r="6.4"/><circle cx="648.3" cy="700.2" r="6.4"/><circle cx="629.1" cy="642.7" r="6.4"/><circle cx="655.7" cy="596.1" r="6.4"/><circle cx="698.4" cy="420.7" r="6.4"/><circle cx="637.8" cy="542.7" r="6.4"/><circle cx="608.0" cy="649.9" r="6.4"/><circle cx="772.1" cy="618.2" r="6.4"/><circle cx="731.1" cy="594.8" r="6.4"/><circle cx="668.8" cy="526.4" r="6.4"/><circle cx="743.4" cy="441.9" r="6.4"/><circle cx="729.8" cy="417.4" r="6.4"/><circle cx="747.9" cy="437.2" r="6.4"/><circle cx="735.1" cy="669.5" r="6.4"/><circle cx="777.4" cy="599.9" r="6.4"/><circle cx="711.6" cy="479.2" r="6.4"/><circle cx="742.9" cy="457.2" r="6.4"/><circle cx="635.4" cy="429.1" r="6.4"/><circle cx="618.6" cy="528.2" r="6.4"/><circle cx="634.0" cy="545.5" r="6.4"/><circle cx="651.3" cy="533.0" r="6.4"/><circle cx="674.0" cy="518.2" r="6.4"/><circle cx="676.1" cy="474.0" r="6.4"/><circle cx="668.4" cy="517.4" r="6.4"/><circle cx="774.4" cy="496.3" r="6.4"/><circle cx="774.9" cy="475.6" r="6.4"/><circle cx="712.9" cy="432.9" r="6.4"/><circle cx="789.8" cy="448.2" r="6.4"/><circle cx="737.9" cy="444.5" r="6.4"/><circle cx="735.3" cy="634.2" r="6.4"/><circle cx="600.5" cy="516.0" r="6.4"/><circle cx="787.1" cy="542.8" r="6.4"/><circle cx="632.7" cy="414.0" r="6.4"/><circle cx="624.2" cy="411.7" r="6.4"/><circle cx="738.9" cy="408.6" r="6.4"/><circle cx="637.1" cy="554.2" r="6.4"/><circle cx="708.4" cy="473.8" r="6.4"/><circle cx="750.6" cy="417.1" r="6.4"/><circle cx="707.1" cy="529.3" r="6.4"/><circle cx="779.5" cy="539.0" r="6.4"/><circle cx="610.8" cy="414.7" r="6.4"/><circle cx="770.6" cy="600.4" r="6.4"/><circle cx="694.8" cy="494.9" r="6.4"/><circle cx="736.6" cy="717.0" r="6.4"/><circle cx="638.4" cy="467.2" r="6.4"/><circle cx="609.0" cy="401.4" r="6.4"/><circle cx="712.9" cy="606.2" r="6.4"/><circle cx="630.1" cy="588.9" r="6.4"/><circle cx="602.7" cy="467.8" r="6.4"/><circle cx="627.4" cy="392.3" r="6.4"/><circle cx="633.5" cy="582.5" r="6.4"/><circle cx="774.5" cy="490.9" r="6.4"/><circle cx="763.4" cy="716.1" r="6.4"/><circle cx="740.0" cy="435.3" r="6.4"/><circle cx="671.5" cy="639.0" r="6.4"/><circle cx="705.8" cy="353.2" r="6.4"/><circle cx="702.9" cy="356.6" r="6.4"/><circle cx="718.9" cy="590.9" r="6.4"/><circle cx="713.9" cy="562.9" r="6.4"/><circle cx="603.5" cy="735.5" r="6.4"/><circle cx="686.6" cy="406.4" r="6.4"/><circle cx="746.4" cy="343.7" r="6.4"/><circle cx="692.8" cy="735.0" r="6.4"/><circle cx="795.3" cy="498.2" r="6.4"/><circle cx="726.0" cy="503.0" r="6.4"/><circle cx="704.0" cy="630.9" r="6.4"/><circle cx="707.3" cy="387.6" r="6.4"/><circle cx="791.4" cy="429.5" r="6.4"/><circle cx="613.1" cy="466.0" r="6.4"/><circle cx="751.3" cy="724.5" r="6.4"/><circle cx="728.0" cy="548.6" r="6.4"/><circle cx="671.2" cy="589.7" r="6.4"/><circle cx="745.9" cy="528.9" r="6.4"/><circle cx="647.5" cy="322.0" r="6.4"/><circle cx="776.3" cy="584.5" r="6.4"/><circle cx="735.2" cy="546.7" r="6.4"/><circle cx="640.3" cy="430.2" r="6.4"/><circle cx="755.9" cy="561.0" r="6.4"/><circle cx="713.9" cy="419.5" r="6.4"/><circle cx="654.8" cy="663.9" r="6.4"/><circle cx="635.7" cy="618.3" r="6.4"/><circle cx="625.1" cy="496.3" r="6.4"/><circle cx="745.4" cy="471.1" r="6.4"/><circle cx="742.4" cy="438.0" r="6.4"/><circle cx="794.0" cy="521.8" r="6.4"/><circle cx="768.4" cy="681.6" r="6.4"/><circle cx="691.7" cy="623.0" r="6.4"/><circle cx="664.2" cy="353.6" r="6.4"/><circle cx="628.7" cy="419.7" r="6.4"/><circle cx="608.1" cy="608.4" r="6.4"/><circle cx="751.0" cy="480.5" r="6.4"/><circle cx="731.6" cy="499.2" r="6.4"/><circle cx="736.6" cy="633.8" r="6.4"/><circle cx="724.3" cy="686.9" r="6.4"/><circle cx="713.4" cy="304.8" r="6.4"/><circle cx="645.5" cy="629.7" r="6.4"/><circle cx="602.1" cy="310.8" r="6.4"/><circle cx="775.1" cy="662.1" r="6.4"/><circle cx="734.1" cy="325.8" r="6.4"/><circle cx="779.2" cy="447.9" r="6.4"/><circle cx="748.0" cy="639.6" r="6.4"/><circle cx="751.1" cy="593.1" r="6.4"/><circle cx="711.7" cy="654.4" r="6.4"/><circle cx="636.7" cy="508.7" r="6.4"/><circle cx="671.9" cy="606.7" r="6.4"/><circle cx="696.0" cy="361.6" r="6.4"/><circle cx="769.1" cy="722.7" r="6.4"/><circle cx="776.6" cy="584.5" r="6.4"/><circle cx="684.9" cy="546.4" r="6.4"/><circle cx="658.8" cy="355.3" r="6.4"/><circle cx="616.1" cy="397.3" r="6.4"/><circle cx="630.8" cy="572.4" r="6.4"/><circle cx="623.4" cy="392.9" r="6.4"/><circle cx="642.2" cy="715.7" r="6.4"/><circle cx="644.9" cy="438.2" r="6.4"/><circle cx="617.4" cy="414.5" r="6.4"/><circle cx="784.4" cy="720.6" r="6.4"/><circle cx="731.8" cy="374.5" r="6.4"/><circle cx="782.3" cy="360.8" r="6.4"/><circle cx="757.1" cy="741.7" r="6.4"/><circle cx="683.7" cy="561.4" r="6.4"/><circle cx="690.7" cy="670.8" r="6.4"/><circle cx="651.3" cy="615.3" r="6.4"/><circle cx="642.8" cy="586.0" r="6.4"/><circle cx="774.8" cy="323.0" r="6.4"/><circle cx="602.3" cy="691.7" r="6.4"/><circle cx="607.7" cy="545.9" r="6.4"/><circle cx="648.3" cy="497.8" r="6.4"/><circle cx="768.8" cy="399.6" r="6.4"/><circle cx="768.3" cy="425.6" r="6.4"/><circle cx="641.9" cy="601.5" r="6.4"/><circle cx="638.3" cy="564.1" r="6.4"/><circle cx="691.7" cy="631.3" r="6.4"/><circle cx="664.3" cy="683.4" r="6.4"/><circle cx="646.0" cy="401.2" r="6.4"/><circle cx="695.4" cy="501.6" r="6.4"/><circle cx="657.2" cy="426.5" r="6.4"/><circle cx="765.7" cy="570.6" r="6.4"/><circle cx="669.0" cy="592.0" r="6.4"/><circle cx="772.4" cy="739.0" r="6.4"/><circle cx="617.8" cy="481.1" r="6.4"/><circle cx="716.8" cy="602.8" r="6.4"/><circle cx="666.7" cy="523.3" r="6.4"/><circle cx="641.7" cy="538.2" r="6.4"/><circle cx="617.9" cy="631.5" r="6.4"/><circle cx="758.0" cy="506.5" r="6.4"/><circle cx="736.3" cy="497.4" r="6.4"/><circle cx="675.2" cy="315.0" r="6.4"/><circle cx="615.5" cy="647.8" r="6.4"/><circle cx="742.6" cy="676.5" r="6.4"/><circle cx="758.2" cy="410.4" r="6.4"/><circle cx="769.6" cy="386.3" r="6.4"/><circle cx="610.5" cy="518.2" r="6.4"/><circle cx="656.9" cy="635.4" r="6.4"/><circle cx="659.4" cy="710.9" r="6.4"/><circle cx="791.1" cy="524.8" r="6.4"/><circle cx="654.4" cy="330.3" r="6.4"/><circle cx="673.7" cy="426.9" r="6.4"/><circle cx="641.1" cy="377.1" r="6.4"/><circle cx="714.6" cy="451.9" r="6.4"/><circle cx="724.4" cy="558.4" r="6.4"/><circle cx="643.0" cy="401.6" r="6.4"/><circle cx="620.7" cy="476.9" r="6.4"/><circle cx="668.0" cy="669.7" r="6.4"/><circle cx="654.7" cy="665.7" r="6.4"/><circle cx="771.0" cy="539.5" r="6.4"/><circle cx="770.5" cy="338.6" r="6.4"/><circle cx="660.6" cy="557.4" r="6.4"/><circle cx="656.9" cy="439.3" r="6.4"/><circle cx="722.8" cy="542.6" r="6.4"/><circle cx="726.3" cy="541.6" r="6.4"/><circle cx="692.2" cy="411.3" r="6.4"/><circle cx="701.7" cy="424.9" r="6.4"/><circle cx="703.3" cy="458.6" r="6.4"/><circle cx="706.1" cy="498.8" r="6.4"/><circle cx="730.9" cy="465.3" r="6.4"/><circle cx="666.3" cy="525.5" r="6.4"/><circle cx="620.8" cy="407.4" r="6.4"/><circle cx="615.1" cy="470.2" r="6.4"/><circle cx="625.9" cy="699.1" r="6.4"/><circle cx="623.6" cy="444.5" r="6.4"/><circle cx="746.1" cy="406.5" r="6.4"/><circle cx="620.0" cy="468.6" r="6.4"/><circle cx="679.9" cy="572.9" r="6.4"/><circle cx="793.0" cy="475.4" r="6.4"/><circle cx="627.0" cy="543.1" r="6.4"/><circle cx="745.9" cy="360.2" r="6.4"/><circle cx="722.6" cy="412.8" r="6.4"/><circle cx="740.5" cy="612.0" r="6.4"/><circle cx="791.9" cy="732.4" r="6.4"/><circle cx="605.1" cy="667.8" r="6.4"/><circle cx="732.4" cy="557.5" r="6.4"/><circle cx="726.9" cy="436.0" r="6.4"/><circle cx="615.8" cy="441.9" r="6.4"/><circle cx="684.7" cy="517.3" r="6.4"/><circle cx="621.2" cy="473.1" r="6.4"/><circle cx="734.0" cy="365.6" r="6.4"/><circle cx="709.1" cy="562.7" r="6.4"/><circle cx="733.9" cy="611.3" r="6.4"/><circle cx="745.0" cy="545.4" r="6.4"/><circle cx="748.4" cy="491.7" r="6.4"/><circle cx="607.3" cy="433.8" r="6.4"/><circle cx="702.7" cy="714.2" r="6.4"/><circle cx="649.6" cy="389.8" r="6.4"/><circle cx="640.1" cy="549.2" r="6.4"/><circle cx="716.2" cy="562.4" r="6.4"/><circle cx="705.7" cy="660.6" r="6.4"/><circle cx="730.2" cy="481.3" r="6.4"/><circle cx="775.7" cy="549.8" r="6.4"/><circle cx="663.3" cy="407.7" r="6.4"/><circle cx="797.2" cy="602.6" r="6.4"/><circle cx="707.2" cy="598.2" r="6.4"/><circle cx="634.6" cy="531.7" r="6.4"/><circle cx="715.0" cy="604.2" r="6.4"/><circle cx="701.3" cy="499.5" r="6.4"/><circle cx="693.2" cy="424.3" r="6.4"/><circle cx="796.9" cy="646.7" r="6.4"/><circle cx="601.2" cy="561.3" r="6.4"/><circle cx="773.1" cy="367.8" r="6.4"/><circle cx="661.9" cy="461.0" r="6.4"/><circle cx="717.6" cy="571.5" r="6.4"/><circle cx="674.1" cy="335.5" r="6.4"/><circle cx="696.8" cy="674.7" r="6.4"/><circle cx="765.5" cy="620.0" r="6.4"/><circle cx="770.2" cy="406.5" r="6.4"/><circle cx="781.7" cy="672.6" r="6.4"/><circle cx="667.7" cy="431.0" r="6.4"/><circle cx="608.4" cy="538.4" r="6.4"/><circle cx="705.9" cy="621.5" r="6.4"/><circle cx="794.5" cy="592.3" r="6.4"/><circle cx="744.2" cy="489.7" r="6.4"/><circle cx="694.7" cy="397.3" r="6.4"/><circle cx="732.3" cy="517.4" r="6.4"/><circle cx="750.0" cy="392.7" r="6.4"/><circle cx="714.9" cy="528.2" r="6.4"/><circle cx="785.5" cy="361.5" r="6.4"/><circle cx="762.4" cy="668.5" r="6.4"/><circle cx="784.6" cy="465.7" r="6.4"/><circle cx="648.6" cy="485.6" r="6.4"/><circle cx="690.2" cy="424.6" r="6.4"/><circle cx="757.0" cy="551.7" r="6.4"/><circle cx="697.3" cy="621.7" r="6.4"/><circle cx="772.4" cy="337.3" r="6.4"/><circle cx="723.6" cy="573.8" r="6.4"/><circle cx="696.1" cy="368.3" r="6.4"/><circle cx="702.5" cy="471.2" r="6.4"/><circle cx="752.0" cy="395.2" r="6.4"/><circle cx="688.0" cy="522.2" r="6.4"/><circle cx="778.2" cy="436.0" r="6.4"/><circle cx="659.9" cy="587.4" r="6.4"/><circle cx="625.0" cy="734.3" r="6.4"/><circle cx="685.1" cy="513.9" r="6.4"/><circle cx="797.1" cy="499.3" r="6.4"/><circle cx="734.0" cy="584.6" r="6.4"/><circle cx="765.3" cy="533.7" r="6.4"/><circle cx="684.0" cy="427.2" r="6.4"/><circle cx="692.9" cy="454.2" r="6.4"/><circle cx="771.5" cy="542.5" r="6.4"/><circle cx="698.2" cy="596.2" r="6.4"/><circle cx="653.7" cy="566.5" r="6.4"/><circle cx="708.4" cy="431.1" r="6.4"/><circle cx="610.1" cy="621.8" r="6.4"/><circle cx="791.6" cy="366.2" r="6.4"/><circle cx="729.1" cy="386.6" r="6.4"/><circle cx="716.8" cy="656.3" r="6.4"/><circle cx="710.6" cy="678.1" r="6.4"/><circle cx="630.0" cy="415.3" r="6.4"/><circle cx="864.3" cy="212.1" r="6.4"/><circle cx="834.8" cy="223.6" r="6.4"/><circle cx="947.9" cy="228.6" r="6.4"/><circle cx="978.2" cy="231.8" r="6.4"/><circle cx="808.6" cy="264.6" r="6.4"/><circle cx="876.4" cy="257.5" r="6.4"/><circle cx="885.7" cy="267.9" r="6.4"/><circle cx="884.5" cy="277.7" r="6.4"/><circle cx="936.1" cy="270.0" r="6.4"/><circle cx="830.7" cy="277.1" r="6.4"/><circle cx="838.9" cy="277.1" r="6.4"/><circle cx="807.1" cy="308.0" r="6.4"/><circle cx="860.7" cy="312.1" r="6.4"/><circle cx="880.0" cy="305.7" r="6.4"/><circle cx="889.6" cy="305.4" r="6.4"/><circle cx="886.1" cy="315.7" r="6.4"/><circle cx="914.6" cy="313.4" r="6.4"/><circle cx="965.2" cy="327.7" r="6.4"/><circle cx="818.8" cy="319.3" r="6.4"/><circle cx="820.5" cy="327.1" r="6.4"/><circle cx="830.4" cy="328.2" r="6.4"/><circle cx="842.0" cy="328.2" r="6.4"/><circle cx="843.8" cy="339.6" r="6.4"/><circle cx="865.2" cy="337.9" r="6.4"/><circle cx="852.1" cy="351.4" r="6.4"/><circle cx="826.2" cy="357.1" r="6.4"/><circle cx="900.9" cy="356.2" r="6.4"/><circle cx="912.1" cy="362.9" r="6.4"/><circle cx="808.0" cy="366.1" r="6.4"/><circle cx="808.9" cy="375.9" r="6.4"/><circle cx="809.8" cy="383.9" r="6.4"/><circle cx="833.0" cy="373.2" r="6.4"/><circle cx="833.9" cy="383.9" r="6.4"/><circle cx="883.9" cy="372.9" r="6.4"/><circle cx="891.4" cy="385.7" r="6.4"/><circle cx="947.9" cy="381.8" r="6.4"/><circle cx="1013.0" cy="385.0" r="6.4"/><circle cx="847.3" cy="396.8" r="6.4"/><circle cx="807.5" cy="399.1" r="6.4"/><circle cx="830.0" cy="403.2" r="6.4"/><circle cx="844.6" cy="410.4" r="6.4"/><circle cx="968.8" cy="403.2" r="6.4"/><circle cx="967.5" cy="408.6" r="6.4"/><circle cx="918.2" cy="408.9" r="6.4"/><circle cx="906.8" cy="415.2" r="6.4"/><circle cx="896.4" cy="421.1" r="6.4"/><circle cx="933.0" cy="418.2" r="6.4"/><circle cx="955.7" cy="420.9" r="6.4"/><circle cx="868.2" cy="421.4" r="6.4"/><circle cx="1048.6" cy="423.2" r="6.4"/><circle cx="873.2" cy="432.5" r="6.4"/><circle cx="828.6" cy="435.7" r="6.4"/><circle cx="846.1" cy="434.3" r="6.4"/><circle cx="861.1" cy="446.1" r="6.4"/><circle cx="877.7" cy="447.9" r="6.4"/><circle cx="882.1" cy="442.9" r="6.4"/><circle cx="891.4" cy="442.0" r="6.4"/><circle cx="900.9" cy="441.4" r="6.4"/><circle cx="908.9" cy="441.1" r="6.4"/><circle cx="917.0" cy="452.7" r="6.4"/><circle cx="925.9" cy="453.2" r="6.4"/><circle cx="949.6" cy="449.1" r="6.4"/><circle cx="957.1" cy="443.8" r="6.4"/><circle cx="977.1" cy="447.9" r="6.4"/><circle cx="853.6" cy="457.1" r="6.4"/><circle cx="803.9" cy="460.4" r="6.4"/><circle cx="869.3" cy="468.8" r="6.4"/><circle cx="825.0" cy="469.6" r="6.4"/><circle cx="967.5" cy="475.9" r="6.4"/><circle cx="1000.0" cy="487.9" r="6.4"/><circle cx="815.2" cy="475.0" r="6.4"/><circle cx="803.6" cy="478.6" r="6.4"/><circle cx="817.9" cy="483.9" r="6.4"/><circle cx="826.8" cy="485.7" r="6.4"/><circle cx="846.8" cy="481.2" r="6.4"/><circle cx="864.3" cy="492.0" r="6.4"/><circle cx="900.0" cy="495.5" r="6.4"/><circle cx="907.1" cy="498.2" r="6.4"/><circle cx="927.7" cy="499.1" r="6.4"/><circle cx="801.8" cy="421.4" r="6.4"/><circle cx="805.4" cy="425.0" r="6.4"/><circle cx="800.0" cy="332.1" r="6.4"/><circle cx="800.0" cy="250.0" r="6.4"/><circle cx="801.8" cy="203.6" r="6.4"/><circle cx="804.5" cy="503.6" r="6.4"/><circle cx="818.8" cy="509.8" r="6.4"/><circle cx="837.5" cy="506.8" r="6.4"/><circle cx="858.0" cy="500.9" r="6.4"/><circle cx="927.7" cy="503.6" r="6.4"/><circle cx="806.2" cy="517.0" r="6.4"/><circle cx="819.6" cy="517.9" r="6.4"/><circle cx="827.7" cy="517.0" r="6.4"/><circle cx="844.6" cy="521.1" r="6.4"/><circle cx="826.8" cy="528.6" r="6.4"/><circle cx="818.8" cy="535.7" r="6.4"/><circle cx="832.1" cy="539.3" r="6.4"/><circle cx="850.0" cy="537.5" r="6.4"/><circle cx="885.4" cy="530.7" r="6.4"/><circle cx="902.3" cy="528.6" r="6.4"/><circle cx="939.8" cy="526.8" r="6.4"/><circle cx="803.6" cy="547.3" r="6.4"/><circle cx="817.0" cy="550.9" r="6.4"/><circle cx="825.0" cy="558.9" r="6.4"/><circle cx="844.6" cy="562.5" r="6.4"/><circle cx="894.3" cy="542.0" r="6.4"/><circle cx="893.8" cy="549.1" r="6.4"/><circle cx="869.3" cy="560.7" r="6.4"/><circle cx="869.3" cy="568.8" r="6.4"/><circle cx="888.0" cy="561.1" r="6.4"/><circle cx="897.3" cy="568.8" r="6.4"/><circle cx="910.4" cy="573.2" r="6.4"/><circle cx="810.7" cy="567.0" r="6.4"/><circle cx="801.8" cy="573.2" r="6.4"/><circle cx="821.8" cy="579.5" r="6.4"/><circle cx="845.5" cy="576.8" r="6.4"/><circle cx="840.2" cy="588.4" r="6.4"/><circle cx="861.2" cy="580.7" r="6.4"/><circle cx="803.6" cy="583.9" r="6.4"/><circle cx="811.6" cy="595.5" r="6.4"/><circle cx="820.5" cy="602.7" r="6.4"/><circle cx="828.9" cy="607.1" r="6.4"/><circle cx="846.4" cy="599.1" r="6.4"/><circle cx="802.7" cy="609.8" r="6.4"/><circle cx="879.5" cy="591.1" r="6.4"/><circle cx="887.5" cy="590.7" r="6.4"/><circle cx="878.6" cy="601.8" r="6.4"/><circle cx="907.7" cy="600.0" r="6.4"/><circle cx="931.2" cy="585.4" r="6.4"/><circle cx="946.4" cy="577.1" r="6.4"/><circle cx="975.9" cy="571.4" r="6.4"/><circle cx="979.5" cy="567.0" r="6.4"/><circle cx="993.8" cy="572.9" r="6.4"/><circle cx="882.1" cy="615.2" r="6.4"/><circle cx="875.0" cy="618.8" r="6.4"/><circle cx="868.8" cy="623.2" r="6.4"/><circle cx="876.8" cy="632.1" r="6.4"/><circle cx="813.4" cy="634.8" r="6.4"/><circle cx="945.5" cy="614.3" r="6.4"/><circle cx="960.2" cy="618.8" r="6.4"/><circle cx="987.5" cy="614.3" r="6.4"/><circle cx="807.1" cy="657.1" r="6.4"/><circle cx="817.9" cy="656.2" r="6.4"/><circle cx="851.8" cy="656.8" r="6.4"/><circle cx="803.6" cy="668.8" r="6.4"/><circle cx="851.8" cy="672.9" r="6.4"/><circle cx="871.1" cy="668.8" r="6.4"/><circle cx="848.2" cy="683.9" r="6.4"/><circle cx="810.7" cy="686.6" r="6.4"/><circle cx="802.7" cy="692.0" r="6.4"/><circle cx="891.4" cy="689.6" r="6.4"/><circle cx="801.8" cy="698.2" r="6.4"/><circle cx="847.9" cy="700.0" r="6.4"/><circle cx="800.9" cy="717.0" r="6.4"/><circle cx="823.2" cy="722.3" r="6.4"/><circle cx="822.3" cy="735.7" r="6.4"/><circle cx="840.2" cy="742.0" r="6.4"/><circle cx="867.0" cy="742.0" r="6.4"/><circle cx="816.4" cy="747.9" r="6.4"/><circle cx="897.3" cy="748.2" r="6.4"/><circle cx="937.1" cy="752.7" r="6.4"/><circle cx="825.0" cy="767.0" r="6.4"/><circle cx="829.5" cy="770.5" r="6.4"/><circle cx="883.9" cy="792.0" r="6.4"/><circle cx="961.6" cy="794.6" r="6.4"/><circle cx="681.8" cy="12.9" r="6.4"/><circle cx="720.0" cy="91.6" r="6.4"/><circle cx="666.6" cy="117.9" r="6.4"/><circle cx="713.8" cy="141.6" r="6.4"/><circle cx="798.2" cy="142.9" r="6.4"/><circle cx="741.4" cy="162.9" r="6.4"/><circle cx="672.9" cy="162.5" r="6.4"/><circle cx="558.9" cy="188.4" r="6.4"/><circle cx="592.9" cy="192.9" r="6.4"/><circle cx="602.7" cy="192.0" r="6.4"/><circle cx="665.2" cy="203.6" r="6.4"/><circle cx="704.1" cy="201.8" r="6.4"/><circle cx="797.3" cy="204.5" r="6.4"/><circle cx="627.7" cy="208.0" r="6.4"/><circle cx="598.2" cy="209.8" r="6.4"/><circle cx="601.4" cy="215.2" r="6.4"/><circle cx="612.9" cy="221.4" r="6.4"/><circle cx="712.5" cy="215.2" r="6.4"/><circle cx="756.8" cy="220.0" r="6.4"/><circle cx="766.1" cy="216.1" r="6.4"/><circle cx="545.9" cy="223.8" r="6.4"/><circle cx="693.8" cy="226.4" r="6.4"/><circle cx="703.6" cy="230.4" r="6.4"/><circle cx="713.4" cy="226.8" r="6.4"/><circle cx="792.0" cy="231.3" r="6.4"/><circle cx="575.5" cy="238.4" r="6.4"/><circle cx="674.6" cy="237.1" r="6.4"/><circle cx="643.4" cy="238.4" r="6.4"/><circle cx="644.3" cy="243.8" r="6.4"/><circle cx="792.9" cy="242.0" r="6.4"/><circle cx="756.2" cy="246.4" r="6.4"/><circle cx="637.5" cy="256.8" r="6.4"/><circle cx="751.4" cy="255.9" r="6.4"/><circle cx="530.7" cy="261.1" r="6.4"/><circle cx="692.5" cy="260.7" r="6.4"/><circle cx="697.3" cy="258.9" r="6.4"/><circle cx="701.8" cy="266.1" r="6.4"/><circle cx="514.3" cy="267.3" r="6.4"/><circle cx="538.8" cy="269.6" r="6.4"/><circle cx="640.7" cy="269.6" r="6.4"/><circle cx="758.0" cy="274.1" r="6.4"/><circle cx="675.5" cy="274.1" r="6.4"/><circle cx="570.5" cy="276.8" r="6.4"/><circle cx="584.8" cy="275.9" r="6.4"/><circle cx="572.3" cy="282.1" r="6.4"/><circle cx="580.4" cy="280.4" r="6.4"/><circle cx="629.5" cy="277.7" r="6.4"/><circle cx="630.4" cy="283.9" r="6.4"/><circle cx="663.4" cy="283.0" r="6.4"/><circle cx="785.4" cy="282.1" r="6.4"/><circle cx="550.5" cy="288.4" r="6.4"/><circle cx="567.9" cy="287.5" r="6.4"/><circle cx="633.0" cy="291.1" r="6.4"/><circle cx="747.3" cy="285.7" r="6.4"/><circle cx="735.7" cy="290.2" r="6.4"/><circle cx="586.6" cy="296.4" r="6.4"/><circle cx="693.8" cy="294.6" r="6.4"/><circle cx="671.4" cy="292.9" r="6.4"/><circle cx="678.6" cy="294.6" r="6.4"/><circle cx="769.6" cy="292.9" r="6.4"/><circle cx="767.9" cy="297.3" r="6.4"/><circle cx="600.0" cy="299.1" r="6.4"/><circle cx="500.0" cy="238.4" r="6.4"/><circle cx="495.0" cy="237.9" r="6.4"/><circle cx="490.2" cy="275.5" r="6.4"/><circle cx="481.2" cy="288.8" r="6.4"/><circle cx="597.3" cy="302.7" r="6.4"/><circle cx="443.4" cy="304.1" r="6.4"/><circle cx="431.8" cy="308.9" r="6.4"/><circle cx="483.0" cy="307.1" r="6.4"/><circle cx="531.2" cy="307.5" r="6.4"/><circle cx="596.4" cy="314.3" r="6.4"/><circle cx="590.2" cy="318.8" r="6.4"/><circle cx="427.1" cy="326.2" r="6.4"/><circle cx="419.6" cy="334.8" r="6.4"/><circle cx="413.0" cy="344.3" r="6.4"/><circle cx="564.3" cy="344.6" r="6.4"/><circle cx="576.4" cy="343.8" r="6.4"/><circle cx="538.4" cy="352.7" r="6.4"/><circle cx="508.9" cy="355.0" r="6.4"/><circle cx="586.6" cy="351.8" r="6.4"/><circle cx="564.3" cy="357.1" r="6.4"/><circle cx="596.4" cy="360.7" r="6.4"/><circle cx="454.5" cy="368.8" r="6.4"/><circle cx="440.2" cy="372.3" r="6.4"/><circle cx="531.2" cy="366.1" r="6.4"/><circle cx="550.0" cy="365.2" r="6.4"/><circle cx="544.6" cy="371.4" r="6.4"/><circle cx="522.3" cy="376.8" r="6.4"/><circle cx="479.1" cy="380.0" r="6.4"/><circle cx="557.1" cy="376.8" r="6.4"/><circle cx="567.9" cy="375.9" r="6.4"/><circle cx="578.6" cy="371.4" r="6.4"/><circle cx="446.8" cy="387.1" r="6.4"/><circle cx="392.9" cy="395.5" r="6.4"/><circle cx="490.2" cy="394.6" r="6.4"/><circle cx="537.9" cy="393.8" r="6.4"/><circle cx="592.9" cy="394.6" r="6.4"/><circle cx="539.3" cy="403.6" r="6.4"/><circle cx="512.0" cy="408.0" r="6.4"/><circle cx="488.9" cy="422.0" r="6.4"/><circle cx="502.3" cy="422.0" r="6.4"/><circle cx="563.8" cy="418.2" r="6.4"/><circle cx="575.0" cy="418.2" r="6.4"/><circle cx="547.9" cy="425.0" r="6.4"/><circle cx="567.5" cy="426.8" r="6.4"/><circle cx="587.0" cy="424.6" r="6.4"/><circle cx="597.3" cy="425.9" r="6.4"/><circle cx="438.0" cy="433.4" r="6.4"/><circle cx="502.7" cy="437.1" r="6.4"/><circle cx="524.6" cy="443.8" r="6.4"/><circle cx="555.7" cy="448.8" r="6.4"/><circle cx="583.0" cy="447.3" r="6.4"/><circle cx="592.9" cy="446.4" r="6.4"/><circle cx="597.3" cy="450.0" r="6.4"/><circle cx="345.2" cy="460.7" r="6.4"/><circle cx="571.4" cy="461.6" r="6.4"/><circle cx="595.5" cy="466.1" r="6.4"/><circle cx="497.0" cy="474.1" r="6.4"/><circle cx="555.7" cy="470.5" r="6.4"/><circle cx="497.3" cy="479.5" r="6.4"/><circle cx="512.0" cy="478.6" r="6.4"/><circle cx="536.1" cy="477.7" r="6.4"/><circle cx="548.2" cy="481.2" r="6.4"/><circle cx="565.2" cy="483.9" r="6.4"/><circle cx="591.1" cy="485.7" r="6.4"/><circle cx="467.0" cy="492.9" r="6.4"/><circle cx="580.4" cy="494.6" r="6.4"/><circle cx="592.9" cy="492.9" r="6.4"/><circle cx="475.5" cy="510.4" r="6.4"/><circle cx="514.3" cy="509.3" r="6.4"/><circle cx="564.3" cy="508.0" r="6.4"/><circle cx="579.5" cy="501.8" r="6.4"/><circle cx="452.3" cy="521.4" r="6.4"/><circle cx="488.4" cy="521.4" r="6.4"/><circle cx="505.0" cy="528.6" r="6.4"/><circle cx="528.6" cy="524.1" r="6.4"/><circle cx="550.4" cy="530.0" r="6.4"/><circle cx="569.3" cy="530.7" r="6.4"/><circle cx="591.1" cy="515.2" r="6.4"/><circle cx="594.6" cy="519.6" r="6.4"/><circle cx="443.8" cy="539.3" r="6.4"/><circle cx="516.1" cy="537.5" r="6.4"/><circle cx="558.9" cy="541.4" r="6.4"/><circle cx="567.9" cy="540.2" r="6.4"/><circle cx="583.9" cy="536.6" r="6.4"/><circle cx="596.4" cy="537.5" r="6.4"/><circle cx="459.8" cy="545.0" r="6.4"/><circle cx="456.2" cy="555.7" r="6.4"/><circle cx="578.6" cy="553.0" r="6.4"/><circle cx="592.9" cy="560.7" r="6.4"/><circle cx="407.7" cy="568.8" r="6.4"/><circle cx="416.1" cy="569.6" r="6.4"/><circle cx="472.3" cy="568.8" r="6.4"/><circle cx="563.4" cy="564.3" r="6.4"/><circle cx="561.6" cy="568.8" r="6.4"/><circle cx="592.0" cy="570.5" r="6.4"/><circle cx="367.3" cy="577.7" r="6.4"/><circle cx="532.7" cy="578.2" r="6.4"/><circle cx="571.4" cy="586.6" r="6.4"/><circle cx="576.8" cy="588.4" r="6.4"/><circle cx="495.2" cy="593.8" r="6.4"/><circle cx="500.0" cy="593.8" r="6.4"/><circle cx="558.0" cy="593.2" r="6.4"/><circle cx="525.0" cy="597.3" r="6.4"/><circle cx="520.5" cy="605.4" r="6.4"/><circle cx="537.5" cy="605.7" r="6.4"/><circle cx="528.6" cy="613.4" r="6.4"/><circle cx="430.9" cy="614.3" r="6.4"/><circle cx="489.3" cy="610.7" r="6.4"/><circle cx="485.7" cy="615.2" r="6.4"/><circle cx="575.0" cy="620.5" r="6.4"/><circle cx="594.6" cy="617.9" r="6.4"/><circle cx="590.2" cy="625.0" r="6.4"/><circle cx="598.2" cy="628.6" r="6.4"/><circle cx="359.8" cy="628.2" r="6.4"/><circle cx="578.6" cy="637.5" r="6.4"/><circle cx="584.8" cy="637.5" r="6.4"/><circle cx="420.2" cy="643.4" r="6.4"/><circle cx="483.6" cy="640.7" r="6.4"/><circle cx="543.8" cy="640.2" r="6.4"/><circle cx="529.5" cy="649.1" r="6.4"/><circle cx="543.8" cy="652.7" r="6.4"/><circle cx="561.6" cy="653.6" r="6.4"/><circle cx="460.7" cy="653.2" r="6.4"/><circle cx="526.8" cy="663.9" r="6.4"/><circle cx="537.5" cy="667.9" r="6.4"/><circle cx="529.5" cy="671.4" r="6.4"/><circle cx="545.5" cy="672.9" r="6.4"/><circle cx="584.8" cy="663.4" r="6.4"/><circle cx="422.9" cy="673.6" r="6.4"/><circle cx="483.4" cy="673.8" r="6.4"/><circle cx="562.5" cy="676.8" r="6.4"/><circle cx="574.1" cy="679.5" r="6.4"/><circle cx="585.7" cy="676.8" r="6.4"/><circle cx="469.6" cy="688.8" r="6.4"/><circle cx="477.3" cy="697.9" r="6.4"/><circle cx="546.4" cy="689.3" r="6.4"/><circle cx="562.5" cy="699.1" r="6.4"/><circle cx="568.8" cy="696.4" r="6.4"/><circle cx="591.1" cy="702.7" r="6.4"/><circle cx="542.0" cy="708.9" r="6.4"/><circle cx="573.2" cy="708.0" r="6.4"/><circle cx="546.4" cy="722.3" r="6.4"/><circle cx="557.1" cy="722.3" r="6.4"/><circle cx="567.9" cy="721.4" r="6.4"/><circle cx="592.3" cy="720.5" r="6.4"/><circle cx="539.8" cy="731.2" r="6.4"/><circle cx="584.8" cy="730.4" r="6.4"/><circle cx="450.0" cy="740.7" r="6.4"/><circle cx="570.9" cy="745.5" r="6.4"/><circle cx="559.5" cy="752.3" r="6.4"/><circle cx="597.3" cy="753.6" r="6.4"/><circle cx="443.8" cy="766.1" r="6.4"/><circle cx="592.9" cy="764.3" r="6.4"/><circle cx="580.7" cy="773.2" r="6.4"/><circle cx="592.3" cy="777.7" r="6.4"/><circle cx="525.9" cy="799.1" r="6.4"/><circle cx="603.0" cy="804.0" r="6.4"/><circle cx="608.0" cy="807.0" r="6.4"/><circle cx="667.0" cy="822.6" r="6.4"/><circle cx="710.0" cy="823.0" r="6.4"/><circle cx="728.4" cy="817.0" r="6.4"/><circle cx="749.4" cy="803.0" r="6.4"/><circle cx="689.0" cy="863.6" r="6.4"/><circle cx="742.4" cy="857.0" r="6.4"/><circle cx="795.0" cy="866.0" r="6.4"/><circle cx="828.0" cy="847.0" r="6.4"/><circle cx="847.0" cy="829.0" r="6.4"/><circle cx="873.0" cy="864.0" r="6.4"/><circle cx="615.4" cy="878.0" r="6.4"/><circle cx="738.6" cy="880.0" r="6.4"/><circle cx="746.0" cy="899.0" r="6.4"/><circle cx="622.4" cy="914.6" r="6.4"/><circle cx="670.4" cy="927.6" r="6.4"/><circle cx="714.4" cy="936.6" r="6.4"/><circle cx="796.0" cy="986.0" r="6.4"/><circle cx="640.0" cy="770.6" r="6.4"/><circle cx="668.0" cy="761.0" r="6.4"/><circle cx="664.4" cy="771.4" r="6.4"/><circle cx="697.4" cy="769.0" r="6.4"/><circle cx="718.4" cy="759.0" r="6.4"/><circle cx="723.0" cy="770.4" r="6.4"/><circle cx="740.0" cy="775.6" r="6.4"/><circle cx="751.0" cy="774.0" r="6.4"/><circle cx="754.4" cy="755.0" r="6.4"/><circle cx="713.4" cy="786.6" r="6.4"/><circle cx="681.4" cy="793.6" r="6.4"/><circle cx="263.7" cy="472.3" r="6.4"/><circle cx="859.6" cy="87.0" r="6.4"/><circle cx="882.5" cy="119.0" r="6.4"/><circle cx="951.0" cy="827.4" r="6.4"/><circle cx="883.5" cy="821.0" r="6.4"/>
</g>
</svg>
<div class="abs" style="left:-1.5px;top:5.5px;font-size:31.5px;line-height:40px;color:#262730;">)</div>
<div class="abs" style="left:1228px;top:24px;width:58px;height:116px;background:#fff;border-radius:8px;box-shadow:0 0 0 4px rgba(0,0,0,.1);">
  <div class="abs" style="left:0;top:57.5px;width:58px;height:2px;background:#ddd;"></div>
  <svg class="abs" style="left:0;top:0" width="58" height="116" viewBox="0 0 58 116"><path d="M17 29.5h24M29 17.5v24M17 88h24" stroke="#333" stroke-width="6" stroke-linecap="round" fill="none"/></svg>
</div>
</div>
</div>
</body>
</html>
